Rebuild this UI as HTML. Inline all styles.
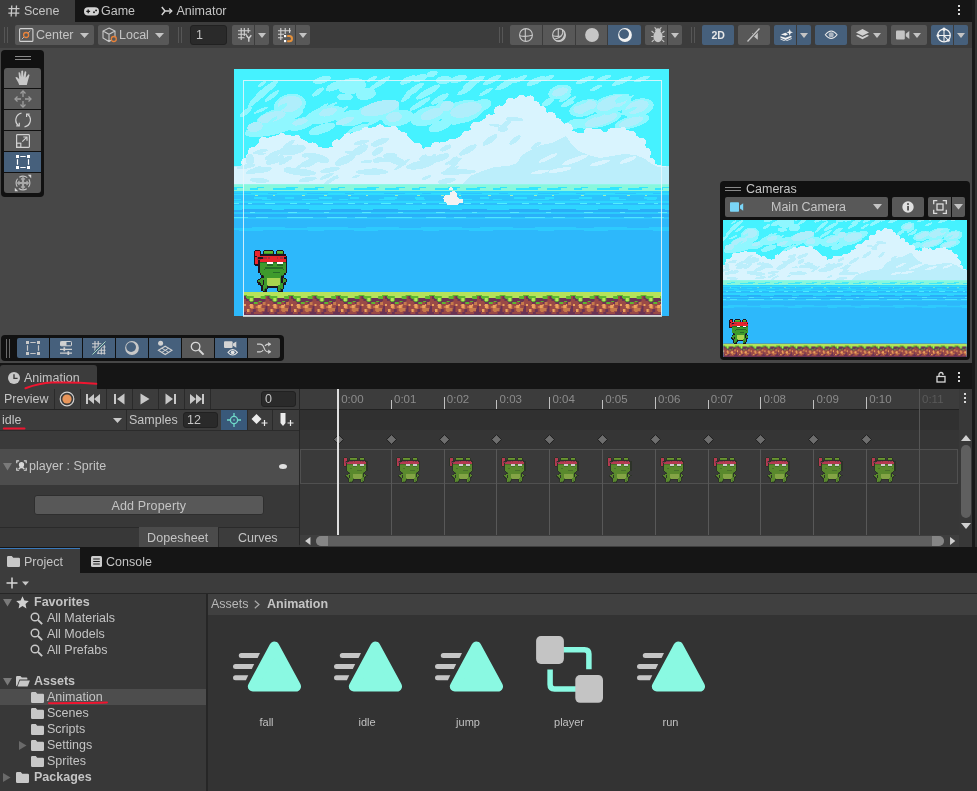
<!DOCTYPE html>
<html lang="en">
<head>
<meta charset="utf-8">
<title>Unity - Animation</title>
<style>
*{box-sizing:border-box;margin:0;padding:0}
html,body{width:977px;height:791px;overflow:hidden;background:#383838}
body{position:relative;will-change:transform;font-family:"Liberation Sans",sans-serif;font-size:12px;color:#c4c4c4;line-height:1}
.abs{position:absolute}
.t{position:absolute;white-space:nowrap;font-size:12.5px;line-height:14px;color:#c4c4c4}
.b{font-weight:bold}
.btn{position:absolute;background:#585858;border-radius:2px}
.on{background:#46607c}
svg{position:absolute;overflow:hidden}
.ic{fill:none;stroke:#c8c8c8;stroke-width:1.2}
</style>
</head>
<body>
<!-- ===== top tab bar ===== -->
<div class="abs" style="left:0;top:0;width:977px;height:22px;background:#151515"></div>
<div class="abs" style="left:0;top:0;width:75px;height:22px;background:#3c3c3c"></div>
<div class="t" style="left:24px;top:4px">Scene</div>
<div class="t" style="left:101px;top:4px">Game</div>
<div class="t" style="left:176.500px;top:4px">Animator</div>
<!-- ===== scene toolbar ===== -->
<div class="abs" style="left:0;top:22px;width:977px;height:26px;background:#3c3c3c"></div>
<div class="abs" style="left:0;top:48px;width:977px;height:316px;background:#474747"></div>
<div class="btn" style="left:15px;top:25px;width:79px;height:20px"></div>
<div class="t" style="left:36px;top:28px">Center</div>
<div class="btn" style="left:98px;top:25px;width:71px;height:20px"></div>
<div class="t" style="left:119px;top:28px">Local</div>
<div class="abs" style="left:190px;top:25px;width:37px;height:20px;background:#2a2a2a;border:1px solid #212121;border-radius:3px"></div>
<div class="t" style="left:196px;top:28px">1</div>
<div class="btn" style="left:232px;top:25px;width:22px;height:20px;border-radius:2px 0 0 2px"></div>
<div class="btn" style="left:255px;top:25px;width:14px;height:20px;border-radius:0 2px 2px 0"></div>
<div class="btn" style="left:273px;top:25px;width:22px;height:20px;border-radius:2px 0 0 2px"></div>
<div class="btn" style="left:296px;top:25px;width:14px;height:20px;border-radius:0 2px 2px 0"></div>
<!-- right group -->
<div class="btn" style="left:510px;top:25px;width:32px;height:20px;border-radius:2px 0 0 2px"></div>
<div class="btn" style="left:543px;top:25px;width:32px;height:20px;border-radius:0"></div>
<div class="btn" style="left:576px;top:25px;width:31px;height:20px;border-radius:0"></div>
<div class="btn on" style="left:608px;top:25px;width:33px;height:20px;border-radius:0 2px 2px 0"></div>
<div class="btn" style="left:645px;top:25px;width:22px;height:20px;border-radius:2px 0 0 2px"></div>
<div class="btn" style="left:668px;top:25px;width:14px;height:20px;border-radius:0 2px 2px 0"></div>
<div class="btn on" style="left:702px;top:25px;width:32px;height:20px"></div>
<div class="t b" style="left:711.500px;top:28px;color:#e8e8e8;font-size:10.500px">2D</div>
<div class="btn" style="left:738px;top:25px;width:32px;height:20px"></div>
<div class="btn on" style="left:774px;top:25px;width:22px;height:20px;border-radius:2px 0 0 2px"></div>
<div class="btn on" style="left:797px;top:25px;width:14px;height:20px;border-radius:0 2px 2px 0"></div>
<div class="btn on" style="left:815px;top:25px;width:32px;height:20px"></div>
<div class="btn" style="left:851px;top:25px;width:36px;height:20px"></div>
<div class="btn" style="left:891px;top:25px;width:36px;height:20px"></div>
<div class="btn on" style="left:931px;top:25px;width:22px;height:20px;border-radius:2px 0 0 2px"></div>
<div class="btn on" style="left:954px;top:25px;width:14px;height:20px;border-radius:0 2px 2px 0"></div>
<!-- ===== tab icons ===== -->
<svg style="left:8px;top:5px" width="12" height="12" viewBox="0 0 12 12" fill="none" stroke="#c8c8c8" stroke-width="1.3"><path d="M3.8 0.5L3.2 11.500M8.500 0.5L7.900 11.500M0.5 3.700H11.500M0.3 8.200H11.300"/></svg>
<svg style="left:84px;top:7px" width="15" height="9" viewBox="0 0 15 9"><rect x="0" y="0.3" width="15" height="8.2" rx="4.100" fill="#d2d2d2"/><path d="M4.200 2.500V6.300M2.300 4.400H6.100" stroke="#1a1a1a" stroke-width="1.300"/><circle cx="10" cy="5.300" r="0.950" fill="#1a1a1a"/><circle cx="12.100" cy="3.400" r="0.950" fill="#1a1a1a"/></svg>
<svg style="left:161px;top:6px" width="12" height="10" viewBox="0 0 12 10" fill="none" stroke="#d2d2d2" stroke-width="1.500"><path d="M0.8 1L4 5L0.8 9M4 5H10.500"/><path d="M8.200 2.500L10.800 5L8.200 7.500" stroke-width="1.300"/></svg>
<!-- ===== toolbar handles ===== -->
<div class="abs" style="left:4px;top:27px;width:1px;height:16px;background:#565656"></div>
<div class="abs" style="left:7px;top:27px;width:1px;height:16px;background:#565656"></div>
<div class="abs" style="left:178px;top:27px;width:1px;height:16px;background:#565656"></div>
<div class="abs" style="left:181px;top:27px;width:1px;height:16px;background:#565656"></div>
<div class="abs" style="left:499px;top:27px;width:1px;height:16px;background:#565656"></div>
<div class="abs" style="left:502px;top:27px;width:1px;height:16px;background:#565656"></div>
<div class="abs" style="left:691px;top:27px;width:1px;height:16px;background:#565656"></div>
<div class="abs" style="left:694px;top:27px;width:1px;height:16px;background:#565656"></div>
<!-- center / local -->
<svg style="left:19px;top:28px" width="15" height="14" viewBox="0 0 15 14" fill="none"><rect x="0.6" y="0.6" width="13.300" height="12.800" rx="1" stroke="#d2d2d2" stroke-width="1.100"/><path d="M2.800 11.200L11.400 2.800" stroke="#b8b8b8" stroke-width="1"/><circle cx="7.100" cy="7" r="2.500" stroke="#e8823a" stroke-width="1.300" fill="#585858"/></svg>
<svg style="left:80px;top:33px" width="9" height="5" viewBox="0 0 9 5"><path d="M0 0H9L4.500 5Z" fill="#c4c4c4"/></svg>
<svg style="left:102px;top:27px" width="16" height="16" viewBox="0 0 16 16" fill="none" stroke="#c8c8c8" stroke-width="1.100"><path d="M7 1L13 4V11L7 14.500L1 11V4ZM1 4L7 7.300L13 4M7 7.300V14.500"/><circle cx="11.800" cy="12" r="2.500" stroke="#e8823a" stroke-width="1.300" fill="#585858"/></svg>
<svg style="left:155px;top:33px" width="9" height="5" viewBox="0 0 9 5"><path d="M0 0H9L4.500 5Z" fill="#c4c4c4"/></svg>
<!-- grid / snap -->
<svg style="left:238px;top:28px" width="14" height="14" viewBox="0 0 14 14" fill="none" stroke="#d2d2d2" stroke-width="1.100"><path d="M3.200 0V12M6.300 0V8M10.200 0V5M0 2.800H12.500M0 6.300H9M0 9.800H6.500"/><path d="M8.300 7.200L10.800 10.400L13.300 7.200M10.800 10.400V13.800" stroke-width="1.400"/></svg>
<svg style="left:258px;top:33px" width="8" height="5" viewBox="0 0 8 5"><path d="M0 0H8L4 5Z" fill="#c4c4c4"/></svg>
<svg style="left:278px;top:28px" width="16" height="15" viewBox="0 0 16 15" fill="none"><path d="M2.800 0V12M7.200 0V6M11.600 0V5M0 2.800H13M0 6.300H6M0 9.800H5" stroke="#d2d2d2" stroke-width="1.100"/><rect x="6" y="7" width="2.200" height="2.200" fill="#fff"/><rect x="6" y="12" width="2.200" height="2.200" fill="#fff"/><path d="M9.200 8.100H11.400A2.600 2.600 0 0 1 11.400 13.300H9.200" stroke="#e8923a" stroke-width="2"/></svg>
<svg style="left:299px;top:33px" width="8" height="5" viewBox="0 0 8 5"><path d="M0 0H8L4 5Z" fill="#c4c4c4"/></svg>
<!-- draw mode group -->
<svg style="left:519px;top:28px" width="14" height="14" viewBox="0 0 14 14" fill="none" stroke="#c8c8c8" stroke-width="1.100"><circle cx="7" cy="7" r="6.400"/><path d="M6.300 0.700V13.300M0.700 7.800Q7 9.200 13.300 7.300"/></svg>
<svg style="left:552px;top:28px" width="14" height="14" viewBox="0 0 14 14" fill="none" stroke="#c8c8c8" stroke-width="1.100"><circle cx="7" cy="7" r="6.400"/><path d="M10.500 1.800A6.400 6.400 0 0 1 2 11.200A6.400 6.400 0 0 0 13.400 7A6.400 6.400 0 0 0 10.500 1.800Z" fill="#c8c8c8" stroke="none"/><path d="M10.500 1.800Q12.500 9 2 11.200" fill="none"/><path d="M6.300 0.700V9.500M0.700 7.800Q5 8.800 9.500 8"/></svg>
<svg style="left:585px;top:28px" width="14" height="14" viewBox="0 0 14 14"><circle cx="7" cy="7" r="6.900" fill="#c6c6c6"/></svg>
<svg style="left:618px;top:28px" width="14" height="14" viewBox="0 0 14 14"><circle cx="7" cy="7" r="6.900" fill="#f2f2f2"/><circle cx="6.100" cy="6.100" r="4.900" fill="#46607c"/></svg>
<!-- bug -->
<svg style="left:651px;top:27px" width="14" height="16" viewBox="0 0 14 16"><ellipse cx="7" cy="9.500" rx="4.600" ry="5.800" fill="#c4c4c4"/><ellipse cx="7" cy="3.600" rx="2.800" ry="2.300" fill="#c4c4c4"/><path d="M2.800 6L0.600 4M11.200 6L13.400 4M2.400 9.500H0.200M11.600 9.500H13.800M2.900 12.800L0.800 14.800M11.100 12.800L13.200 14.800M5 1.800L3.600 0.300M9 1.800L10.400 0.300" stroke="#c4c4c4" stroke-width="1.100" fill="none"/></svg>
<svg style="left:671px;top:33px" width="8" height="5" viewBox="0 0 8 5"><path d="M0 0H8L4 5Z" fill="#c4c4c4"/></svg>
<!-- audio mute -->
<svg style="left:746px;top:27px" width="16" height="16" viewBox="0 0 16 16"><path d="M6 6.200H8.200L11.800 3.200V12.800L8.200 9.800H6Z" fill="#c4c4c4"/><path d="M1.500 14.500L13.500 1.500" stroke="#585858" stroke-width="3.200"/><path d="M1.500 14.500L13.500 1.500" stroke="#c4c4c4" stroke-width="1.300"/></svg>
<!-- fx -->
<svg style="left:779.500px;top:28.500px" width="13.500" height="12.600" viewBox="0 0 15 14" fill="#f0f0f0"><path d="M10.800 0L11.800 2.700L14.500 3.700L11.800 4.700L10.800 7.400L9.800 4.700L7.100 3.700L9.800 2.700Z"/><path d="M6 4.200L9 5.800L6.200 7.600L1 6.200Z"/><path d="M0.500 8L6.200 9.800L12.200 7.600L13.200 9L6.200 12.200L0.500 9.800Z"/><path d="M0.500 10.600L6.200 13L13 10V11.200L6.200 14L0.500 11.800Z" opacity=".9"/></svg>
<svg style="left:800px;top:33px" width="8" height="5" viewBox="0 0 8 5"><path d="M0 0H8L4 5Z" fill="#c4c4c4"/></svg>
<!-- eye -->
<svg style="left:824px;top:30.200px" width="14.400" height="9.600" viewBox="0 0 16 12"><path d="M0.600 6Q8 -3.400 15.400 6Q8 15.400 0.600 6Z" fill="none" stroke="#e8e8e8" stroke-width="1.300"/><circle cx="8" cy="6" r="3.200" fill="#aab4c0"/></svg>
<!-- layers -->
<svg style="left:856px;top:29px" width="13" height="12" viewBox="0 0 13 12" fill="#d0d0d0"><path d="M6.500 0L13 3.400L6.500 6.800L0 3.400Z"/><path d="M1.800 5.700L6.500 8.100L11.200 5.700L13 6.700L6.500 10.200L0 6.700Z"/></svg>
<svg style="left:873px;top:33px" width="8" height="5" viewBox="0 0 8 5"><path d="M0 0H8L4 5Z" fill="#c4c4c4"/></svg>
<!-- camera -->
<svg style="left:896px;top:30px" width="14" height="10" viewBox="0 0 14 10" fill="#c4c4c4"><rect x="0" y="0.500" width="8.800" height="9" rx="1"/><path d="M9.800 3.800L13.300 1V9L9.800 6.200Z"/></svg>
<svg style="left:913px;top:33px" width="8" height="5" viewBox="0 0 8 5"><path d="M0 0H8L4 5Z" fill="#c4c4c4"/></svg>
<!-- gizmo -->
<svg style="left:936.300px;top:26.500px" width="16" height="16" viewBox="0 0 16 16" fill="none" stroke="#f0f0f0" stroke-width="1.300"><circle cx="8" cy="8.500" r="6.300"/><path d="M1.800 8.500H14.200M8 2.500V14.500M8 8.500L12 13" stroke-width="1.100"/><circle cx="8" cy="2.200" r="1.700" fill="#f0f0f0" stroke="none"/><circle cx="2" cy="8.500" r="1.500" fill="#f0f0f0" stroke="none"/><circle cx="12.300" cy="13.200" r="1.500" fill="#f0f0f0" stroke="none"/></svg>
<svg style="left:957px;top:33px" width="8" height="5" viewBox="0 0 8 5"><path d="M0 0H8L4 5Z" fill="#c4c4c4"/></svg>
<!-- ===== shared scene definitions ===== -->
<svg width="0" height="0" style="left:0;top:0">
<defs>
<g id="frog" shape-rendering="crispEdges"><rect x="1.43" y="0.00" width="4.35" height="1.50" fill="#1c1420"/><rect x="10.04" y="0.00" width="8.66" height="1.50" fill="#1c1420"/><rect x="22.96" y="0.00" width="5.79" height="1.50" fill="#1c1420"/><rect x="0.00" y="1.45" width="1.48" height="1.50" fill="#1c1420"/><rect x="1.43" y="1.45" width="4.35" height="1.50" fill="#ea252c"/><rect x="5.74" y="1.45" width="1.48" height="1.50" fill="#1c1420"/><rect x="8.61" y="1.45" width="1.48" height="1.50" fill="#1c1420"/><rect x="10.04" y="1.45" width="8.66" height="1.50" fill="#5eb82f"/><rect x="18.65" y="1.45" width="1.48" height="1.50" fill="#1c1420"/><rect x="21.52" y="1.45" width="1.48" height="1.50" fill="#1c1420"/><rect x="22.96" y="1.45" width="5.79" height="1.50" fill="#5eb82f"/><rect x="28.70" y="1.45" width="1.48" height="1.50" fill="#1c1420"/><rect x="0.00" y="2.90" width="1.48" height="1.50" fill="#1c1420"/><rect x="1.43" y="2.90" width="4.35" height="1.50" fill="#ea252c"/><rect x="5.74" y="2.90" width="1.48" height="1.50" fill="#1c1420"/><rect x="8.61" y="2.90" width="1.48" height="1.50" fill="#1c1420"/><rect x="10.04" y="2.90" width="8.66" height="1.50" fill="#3e9a2c"/><rect x="18.65" y="2.90" width="1.48" height="1.50" fill="#1c1420"/><rect x="21.52" y="2.90" width="1.48" height="1.50" fill="#1c1420"/><rect x="22.96" y="2.90" width="5.79" height="1.50" fill="#3e9a2c"/><rect x="28.70" y="2.90" width="1.48" height="1.50" fill="#1c1420"/><rect x="0.00" y="4.34" width="1.48" height="1.50" fill="#1c1420"/><rect x="1.43" y="4.34" width="4.35" height="1.50" fill="#ea252c"/><rect x="5.74" y="4.34" width="25.88" height="1.50" fill="#1c1420"/><rect x="0.00" y="5.79" width="2.92" height="1.50" fill="#1c1420"/><rect x="2.87" y="5.79" width="28.75" height="1.50" fill="#ea252c"/><rect x="31.57" y="5.79" width="1.48" height="1.50" fill="#1c1420"/><rect x="0.00" y="7.24" width="1.48" height="1.50" fill="#1c1420"/><rect x="1.43" y="7.24" width="1.48" height="1.50" fill="#ea252c"/><rect x="2.87" y="7.24" width="1.48" height="1.50" fill="#a82c3c"/><rect x="4.30" y="7.24" width="4.35" height="1.50" fill="#1c1420"/><rect x="8.61" y="7.24" width="4.35" height="1.50" fill="#a82c3c"/><rect x="12.91" y="7.24" width="1.48" height="1.50" fill="#ea252c"/><rect x="14.35" y="7.24" width="1.48" height="1.50" fill="#a82c3c"/><rect x="15.78" y="7.24" width="7.22" height="1.50" fill="#ea252c"/><rect x="22.96" y="7.24" width="1.48" height="1.50" fill="#a82c3c"/><rect x="24.39" y="7.24" width="1.48" height="1.50" fill="#ea252c"/><rect x="25.83" y="7.24" width="2.92" height="1.50" fill="#a82c3c"/><rect x="28.70" y="7.24" width="1.48" height="1.50" fill="#ea252c"/><rect x="30.13" y="7.24" width="2.92" height="1.50" fill="#1c1420"/><rect x="0.00" y="8.69" width="1.48" height="1.50" fill="#1c1420"/><rect x="1.43" y="8.69" width="1.48" height="1.50" fill="#ea252c"/><rect x="2.87" y="8.69" width="4.35" height="1.50" fill="#a82c3c"/><rect x="7.17" y="8.69" width="24.44" height="1.50" fill="#ea252c"/><rect x="31.57" y="8.69" width="1.48" height="1.50" fill="#1c1420"/><rect x="0.00" y="10.14" width="1.48" height="1.50" fill="#1c1420"/><rect x="1.43" y="10.14" width="2.92" height="1.50" fill="#ea252c"/><rect x="4.30" y="10.14" width="1.48" height="1.50" fill="#1c1420"/><rect x="5.74" y="10.14" width="25.88" height="1.50" fill="#ea252c"/><rect x="31.57" y="10.14" width="1.48" height="1.50" fill="#1c1420"/><rect x="0.00" y="11.59" width="1.48" height="1.50" fill="#1c1420"/><rect x="1.43" y="11.59" width="2.92" height="1.50" fill="#ea252c"/><rect x="4.30" y="11.59" width="1.48" height="1.50" fill="#1c1420"/><rect x="5.74" y="11.59" width="7.22" height="1.50" fill="#256b28"/><rect x="12.91" y="11.59" width="5.79" height="1.50" fill="#ffffff"/><rect x="18.65" y="11.59" width="4.35" height="1.50" fill="#256b28"/><rect x="22.96" y="11.59" width="5.79" height="1.50" fill="#ffffff"/><rect x="28.70" y="11.59" width="2.92" height="1.50" fill="#256b28"/><rect x="31.57" y="11.59" width="1.48" height="1.50" fill="#1c1420"/><rect x="0.00" y="13.03" width="1.48" height="1.50" fill="#1c1420"/><rect x="1.43" y="13.03" width="2.92" height="1.50" fill="#ea252c"/><rect x="4.30" y="13.03" width="1.48" height="1.50" fill="#1c1420"/><rect x="5.74" y="13.03" width="7.22" height="1.50" fill="#3e9a2c"/><rect x="12.91" y="13.03" width="5.79" height="1.50" fill="#ffffff"/><rect x="18.65" y="13.03" width="4.35" height="1.50" fill="#3e9a2c"/><rect x="22.96" y="13.03" width="5.79" height="1.50" fill="#ffffff"/><rect x="28.70" y="13.03" width="2.92" height="1.50" fill="#3e9a2c"/><rect x="31.57" y="13.03" width="1.48" height="1.50" fill="#1c1420"/><rect x="1.43" y="14.48" width="4.35" height="1.50" fill="#1c1420"/><rect x="5.74" y="14.48" width="7.22" height="1.50" fill="#3e9a2c"/><rect x="12.91" y="14.48" width="5.79" height="1.50" fill="#256b28"/><rect x="18.65" y="14.48" width="4.35" height="1.50" fill="#3e9a2c"/><rect x="22.96" y="14.48" width="5.79" height="1.50" fill="#256b28"/><rect x="28.70" y="14.48" width="2.92" height="1.50" fill="#3e9a2c"/><rect x="31.57" y="14.48" width="1.48" height="1.50" fill="#1c1420"/><rect x="4.30" y="15.93" width="1.48" height="1.50" fill="#1c1420"/><rect x="5.74" y="15.93" width="25.88" height="1.50" fill="#3e9a2c"/><rect x="31.57" y="15.93" width="1.48" height="1.50" fill="#1c1420"/><rect x="4.30" y="17.38" width="1.48" height="1.50" fill="#1c1420"/><rect x="5.74" y="17.38" width="5.79" height="1.50" fill="#3e9a2c"/><rect x="11.48" y="17.38" width="17.27" height="1.50" fill="#256b28"/><rect x="28.70" y="17.38" width="2.92" height="1.50" fill="#3e9a2c"/><rect x="31.57" y="17.38" width="1.48" height="1.50" fill="#1c1420"/><rect x="4.30" y="18.83" width="1.48" height="1.50" fill="#1c1420"/><rect x="5.74" y="18.83" width="4.35" height="1.50" fill="#3e9a2c"/><rect x="10.04" y="18.83" width="1.48" height="1.50" fill="#256b28"/><rect x="11.48" y="18.83" width="17.27" height="1.50" fill="#3e9a2c"/><rect x="28.70" y="18.83" width="1.48" height="1.50" fill="#256b28"/><rect x="30.13" y="18.83" width="1.48" height="1.50" fill="#3e9a2c"/><rect x="31.57" y="18.83" width="1.48" height="1.50" fill="#1c1420"/><rect x="4.30" y="20.28" width="1.48" height="1.50" fill="#1c1420"/><rect x="5.74" y="20.28" width="25.88" height="1.50" fill="#3e9a2c"/><rect x="31.57" y="20.28" width="1.48" height="1.50" fill="#1c1420"/><rect x="4.30" y="21.72" width="1.48" height="1.50" fill="#1c1420"/><rect x="5.74" y="21.72" width="12.96" height="1.50" fill="#3e9a2c"/><rect x="18.65" y="21.72" width="7.22" height="1.50" fill="#256b28"/><rect x="25.83" y="21.72" width="5.79" height="1.50" fill="#3e9a2c"/><rect x="31.57" y="21.72" width="1.48" height="1.50" fill="#1c1420"/><rect x="5.74" y="23.17" width="1.48" height="1.50" fill="#1c1420"/><rect x="7.17" y="23.17" width="23.01" height="1.50" fill="#3e9a2c"/><rect x="30.13" y="23.17" width="1.48" height="1.50" fill="#1c1420"/><rect x="7.17" y="24.62" width="1.48" height="1.50" fill="#1c1420"/><rect x="8.61" y="24.62" width="1.48" height="1.50" fill="#256b28"/><rect x="10.04" y="24.62" width="17.27" height="1.50" fill="#3e9a2c"/><rect x="27.26" y="24.62" width="1.48" height="1.50" fill="#256b28"/><rect x="28.70" y="24.62" width="1.48" height="1.50" fill="#1c1420"/><rect x="7.17" y="26.07" width="2.92" height="1.50" fill="#1c1420"/><rect x="10.04" y="26.07" width="17.27" height="1.50" fill="#3e9a2c"/><rect x="27.26" y="26.07" width="2.92" height="1.50" fill="#1c1420"/><rect x="5.74" y="27.52" width="1.48" height="1.50" fill="#1c1420"/><rect x="7.17" y="27.52" width="5.79" height="1.50" fill="#3e9a2c"/><rect x="12.91" y="27.52" width="12.96" height="1.50" fill="#a9d44f"/><rect x="25.83" y="27.52" width="1.48" height="1.50" fill="#3e9a2c"/><rect x="27.26" y="27.52" width="1.48" height="1.50" fill="#1c1420"/><rect x="28.70" y="27.52" width="1.48" height="1.50" fill="#3e9a2c"/><rect x="30.13" y="27.52" width="1.48" height="1.50" fill="#1c1420"/><rect x="4.30" y="28.97" width="1.48" height="1.50" fill="#1c1420"/><rect x="5.74" y="28.97" width="7.22" height="1.50" fill="#3e9a2c"/><rect x="12.91" y="28.97" width="12.96" height="1.50" fill="#a9d44f"/><rect x="25.83" y="28.97" width="1.48" height="1.50" fill="#3e9a2c"/><rect x="27.26" y="28.97" width="1.48" height="1.50" fill="#1c1420"/><rect x="28.70" y="28.97" width="2.92" height="1.50" fill="#3e9a2c"/><rect x="31.57" y="28.97" width="1.48" height="1.50" fill="#1c1420"/><rect x="2.87" y="30.41" width="1.48" height="1.50" fill="#1c1420"/><rect x="4.30" y="30.41" width="4.35" height="1.50" fill="#3e9a2c"/><rect x="8.61" y="30.41" width="1.48" height="1.50" fill="#1c1420"/><rect x="10.04" y="30.41" width="2.92" height="1.50" fill="#3e9a2c"/><rect x="12.91" y="30.41" width="12.96" height="1.50" fill="#a9d44f"/><rect x="25.83" y="30.41" width="1.48" height="1.50" fill="#3e9a2c"/><rect x="27.26" y="30.41" width="1.48" height="1.50" fill="#1c1420"/><rect x="28.70" y="30.41" width="2.92" height="1.50" fill="#3e9a2c"/><rect x="31.57" y="30.41" width="1.48" height="1.50" fill="#1c1420"/><rect x="2.87" y="31.86" width="2.92" height="1.50" fill="#1c1420"/><rect x="5.74" y="31.86" width="2.92" height="1.50" fill="#3e9a2c"/><rect x="8.61" y="31.86" width="1.48" height="1.50" fill="#1c1420"/><rect x="10.04" y="31.86" width="2.92" height="1.50" fill="#3e9a2c"/><rect x="12.91" y="31.86" width="12.96" height="1.50" fill="#a9d44f"/><rect x="25.83" y="31.86" width="1.48" height="1.50" fill="#3e9a2c"/><rect x="27.26" y="31.86" width="1.48" height="1.50" fill="#1c1420"/><rect x="28.70" y="31.86" width="1.48" height="1.50" fill="#3e9a2c"/><rect x="30.13" y="31.86" width="1.48" height="1.50" fill="#1c1420"/><rect x="4.30" y="33.31" width="2.92" height="1.50" fill="#1c1420"/><rect x="7.17" y="33.31" width="1.48" height="1.50" fill="#3e9a2c"/><rect x="8.61" y="33.31" width="1.48" height="1.50" fill="#1c1420"/><rect x="10.04" y="33.31" width="2.92" height="1.50" fill="#3e9a2c"/><rect x="12.91" y="33.31" width="12.96" height="1.50" fill="#a9d44f"/><rect x="25.83" y="33.31" width="2.92" height="1.50" fill="#3e9a2c"/><rect x="28.70" y="33.31" width="2.92" height="1.50" fill="#1c1420"/><rect x="5.74" y="34.76" width="2.92" height="1.50" fill="#1c1420"/><rect x="8.61" y="34.76" width="5.79" height="1.50" fill="#3e9a2c"/><rect x="14.35" y="34.76" width="10.09" height="1.50" fill="#a9d44f"/><rect x="24.39" y="34.76" width="4.35" height="1.50" fill="#3e9a2c"/><rect x="28.70" y="34.76" width="1.48" height="1.50" fill="#1c1420"/><rect x="7.17" y="36.21" width="1.48" height="1.50" fill="#1c1420"/><rect x="8.61" y="36.21" width="4.35" height="1.50" fill="#3e9a2c"/><rect x="12.91" y="36.21" width="11.53" height="1.50" fill="#1c1420"/><rect x="24.39" y="36.21" width="4.35" height="1.50" fill="#3e9a2c"/><rect x="28.70" y="36.21" width="1.48" height="1.50" fill="#1c1420"/><rect x="7.17" y="37.66" width="1.48" height="1.50" fill="#1c1420"/><rect x="8.61" y="37.66" width="2.92" height="1.50" fill="#3e9a2c"/><rect x="11.48" y="37.66" width="1.48" height="1.50" fill="#256b28"/><rect x="12.91" y="37.66" width="1.48" height="1.50" fill="#1c1420"/><rect x="22.96" y="37.66" width="1.48" height="1.50" fill="#1c1420"/><rect x="24.39" y="37.66" width="1.48" height="1.50" fill="#3e9a2c"/><rect x="25.83" y="37.66" width="1.48" height="1.50" fill="#256b28"/><rect x="27.26" y="37.66" width="1.48" height="1.50" fill="#3e9a2c"/><rect x="28.70" y="37.66" width="1.48" height="1.50" fill="#1c1420"/><rect x="7.17" y="39.10" width="1.48" height="1.50" fill="#1c1420"/><rect x="8.61" y="39.10" width="1.48" height="1.50" fill="#3e9a2c"/><rect x="10.04" y="39.10" width="1.48" height="1.50" fill="#256b28"/><rect x="11.48" y="39.10" width="1.48" height="1.50" fill="#1c1420"/><rect x="22.96" y="39.10" width="1.48" height="1.50" fill="#1c1420"/><rect x="24.39" y="39.10" width="1.48" height="1.50" fill="#3e9a2c"/><rect x="25.83" y="39.10" width="1.48" height="1.50" fill="#256b28"/><rect x="27.26" y="39.10" width="1.48" height="1.50" fill="#1c1420"/><rect x="8.61" y="40.55" width="4.35" height="1.50" fill="#1c1420"/><rect x="24.39" y="40.55" width="4.35" height="1.50" fill="#1c1420"/></g>
<g id="frogt" shape-rendering="crispEdges"><rect x="1.43" y="0.00" width="4.35" height="1.50" fill="#2d3329"/><rect x="10.04" y="0.00" width="8.66" height="1.50" fill="#2d3329"/><rect x="22.96" y="0.00" width="5.79" height="1.50" fill="#2d3329"/><rect x="0.00" y="1.45" width="1.48" height="1.50" fill="#2d3329"/><rect x="1.43" y="1.45" width="4.35" height="1.50" fill="#b43a50"/><rect x="5.74" y="1.45" width="1.48" height="1.50" fill="#2d3329"/><rect x="8.61" y="1.45" width="1.48" height="1.50" fill="#2d3329"/><rect x="10.04" y="1.45" width="8.66" height="1.50" fill="#6d9530"/><rect x="18.65" y="1.45" width="1.48" height="1.50" fill="#2d3329"/><rect x="21.52" y="1.45" width="1.48" height="1.50" fill="#2d3329"/><rect x="22.96" y="1.45" width="5.79" height="1.50" fill="#6d9530"/><rect x="28.70" y="1.45" width="1.48" height="1.50" fill="#2d3329"/><rect x="0.00" y="2.90" width="1.48" height="1.50" fill="#2d3329"/><rect x="1.43" y="2.90" width="4.35" height="1.50" fill="#b43a50"/><rect x="5.74" y="2.90" width="1.48" height="1.50" fill="#2d3329"/><rect x="8.61" y="2.90" width="1.48" height="1.50" fill="#2d3329"/><rect x="10.04" y="2.90" width="8.66" height="1.50" fill="#5a892d"/><rect x="18.65" y="2.90" width="1.48" height="1.50" fill="#2d3329"/><rect x="21.52" y="2.90" width="1.48" height="1.50" fill="#2d3329"/><rect x="22.96" y="2.90" width="5.79" height="1.50" fill="#5a892d"/><rect x="28.70" y="2.90" width="1.48" height="1.50" fill="#2d3329"/><rect x="0.00" y="4.34" width="1.48" height="1.50" fill="#2d3329"/><rect x="1.43" y="4.34" width="4.35" height="1.50" fill="#b43a50"/><rect x="5.74" y="4.34" width="25.88" height="1.50" fill="#2d3329"/><rect x="0.00" y="5.79" width="2.92" height="1.50" fill="#2d3329"/><rect x="2.87" y="5.79" width="28.75" height="1.50" fill="#b43a50"/><rect x="31.57" y="5.79" width="1.48" height="1.50" fill="#2d3329"/><rect x="0.00" y="7.24" width="1.48" height="1.50" fill="#2d3329"/><rect x="1.43" y="7.24" width="1.48" height="1.50" fill="#b43a50"/><rect x="2.87" y="7.24" width="1.48" height="1.50" fill="#85354e"/><rect x="4.30" y="7.24" width="4.35" height="1.50" fill="#2d3329"/><rect x="8.61" y="7.24" width="4.35" height="1.50" fill="#85354e"/><rect x="12.91" y="7.24" width="1.48" height="1.50" fill="#b43a50"/><rect x="14.35" y="7.24" width="1.48" height="1.50" fill="#85354e"/><rect x="15.78" y="7.24" width="7.22" height="1.50" fill="#b43a50"/><rect x="22.96" y="7.24" width="1.48" height="1.50" fill="#85354e"/><rect x="24.39" y="7.24" width="1.48" height="1.50" fill="#b43a50"/><rect x="25.83" y="7.24" width="2.92" height="1.50" fill="#85354e"/><rect x="28.70" y="7.24" width="1.48" height="1.50" fill="#b43a50"/><rect x="30.13" y="7.24" width="2.92" height="1.50" fill="#2d3329"/><rect x="0.00" y="8.69" width="1.48" height="1.50" fill="#2d3329"/><rect x="1.43" y="8.69" width="1.48" height="1.50" fill="#b43a50"/><rect x="2.87" y="8.69" width="4.35" height="1.50" fill="#85354e"/><rect x="7.17" y="8.69" width="24.44" height="1.50" fill="#b43a50"/><rect x="31.57" y="8.69" width="1.48" height="1.50" fill="#2d3329"/><rect x="0.00" y="10.14" width="1.48" height="1.50" fill="#2d3329"/><rect x="1.43" y="10.14" width="2.92" height="1.50" fill="#b43a50"/><rect x="4.30" y="10.14" width="1.48" height="1.50" fill="#2d3329"/><rect x="5.74" y="10.14" width="25.88" height="1.50" fill="#b43a50"/><rect x="31.57" y="10.14" width="1.48" height="1.50" fill="#2d3329"/><rect x="0.00" y="11.59" width="1.48" height="1.50" fill="#2d3329"/><rect x="1.43" y="11.59" width="2.92" height="1.50" fill="#b43a50"/><rect x="4.30" y="11.59" width="1.48" height="1.50" fill="#2d3329"/><rect x="5.74" y="11.59" width="7.22" height="1.50" fill="#48702a"/><rect x="12.91" y="11.59" width="5.79" height="1.50" fill="#cdcdcd"/><rect x="18.65" y="11.59" width="4.35" height="1.50" fill="#48702a"/><rect x="22.96" y="11.59" width="5.79" height="1.50" fill="#cdcdcd"/><rect x="28.70" y="11.59" width="2.92" height="1.50" fill="#48702a"/><rect x="31.57" y="11.59" width="1.48" height="1.50" fill="#2d3329"/><rect x="0.00" y="13.03" width="1.48" height="1.50" fill="#2d3329"/><rect x="1.43" y="13.03" width="2.92" height="1.50" fill="#b43a50"/><rect x="4.30" y="13.03" width="1.48" height="1.50" fill="#2d3329"/><rect x="5.74" y="13.03" width="7.22" height="1.50" fill="#5a892d"/><rect x="12.91" y="13.03" width="5.79" height="1.50" fill="#cdcdcd"/><rect x="18.65" y="13.03" width="4.35" height="1.50" fill="#5a892d"/><rect x="22.96" y="13.03" width="5.79" height="1.50" fill="#cdcdcd"/><rect x="28.70" y="13.03" width="2.92" height="1.50" fill="#5a892d"/><rect x="31.57" y="13.03" width="1.48" height="1.50" fill="#2d3329"/><rect x="1.43" y="14.48" width="4.35" height="1.50" fill="#2d3329"/><rect x="5.74" y="14.48" width="7.22" height="1.50" fill="#5a892d"/><rect x="12.91" y="14.48" width="5.79" height="1.50" fill="#48702a"/><rect x="18.65" y="14.48" width="4.35" height="1.50" fill="#5a892d"/><rect x="22.96" y="14.48" width="5.79" height="1.50" fill="#48702a"/><rect x="28.70" y="14.48" width="2.92" height="1.50" fill="#5a892d"/><rect x="31.57" y="14.48" width="1.48" height="1.50" fill="#2d3329"/><rect x="4.30" y="15.93" width="1.48" height="1.50" fill="#2d3329"/><rect x="5.74" y="15.93" width="25.88" height="1.50" fill="#5a892d"/><rect x="31.57" y="15.93" width="1.48" height="1.50" fill="#2d3329"/><rect x="4.30" y="17.38" width="1.48" height="1.50" fill="#2d3329"/><rect x="5.74" y="17.38" width="5.79" height="1.50" fill="#5a892d"/><rect x="11.48" y="17.38" width="17.27" height="1.50" fill="#48702a"/><rect x="28.70" y="17.38" width="2.92" height="1.50" fill="#5a892d"/><rect x="31.57" y="17.38" width="1.48" height="1.50" fill="#2d3329"/><rect x="4.30" y="18.83" width="1.48" height="1.50" fill="#2d3329"/><rect x="5.74" y="18.83" width="4.35" height="1.50" fill="#5a892d"/><rect x="10.04" y="18.83" width="1.48" height="1.50" fill="#48702a"/><rect x="11.48" y="18.83" width="17.27" height="1.50" fill="#5a892d"/><rect x="28.70" y="18.83" width="1.48" height="1.50" fill="#48702a"/><rect x="30.13" y="18.83" width="1.48" height="1.50" fill="#5a892d"/><rect x="31.57" y="18.83" width="1.48" height="1.50" fill="#2d3329"/><rect x="4.30" y="20.28" width="1.48" height="1.50" fill="#2d3329"/><rect x="5.74" y="20.28" width="25.88" height="1.50" fill="#5a892d"/><rect x="31.57" y="20.28" width="1.48" height="1.50" fill="#2d3329"/><rect x="4.30" y="21.72" width="1.48" height="1.50" fill="#2d3329"/><rect x="5.74" y="21.72" width="12.96" height="1.50" fill="#5a892d"/><rect x="18.65" y="21.72" width="7.22" height="1.50" fill="#48702a"/><rect x="25.83" y="21.72" width="5.79" height="1.50" fill="#5a892d"/><rect x="31.57" y="21.72" width="1.48" height="1.50" fill="#2d3329"/><rect x="5.74" y="23.17" width="1.48" height="1.50" fill="#2d3329"/><rect x="7.17" y="23.17" width="23.01" height="1.50" fill="#5a892d"/><rect x="30.13" y="23.17" width="1.48" height="1.50" fill="#2d3329"/><rect x="7.17" y="24.62" width="1.48" height="1.50" fill="#2d3329"/><rect x="8.61" y="24.62" width="1.48" height="1.50" fill="#48702a"/><rect x="10.04" y="24.62" width="17.27" height="1.50" fill="#5a892d"/><rect x="27.26" y="24.62" width="1.48" height="1.50" fill="#48702a"/><rect x="28.70" y="24.62" width="1.48" height="1.50" fill="#2d3329"/><rect x="7.17" y="26.07" width="2.92" height="1.50" fill="#2d3329"/><rect x="10.04" y="26.07" width="17.27" height="1.50" fill="#5a892d"/><rect x="27.26" y="26.07" width="2.92" height="1.50" fill="#2d3329"/><rect x="5.74" y="27.52" width="1.48" height="1.50" fill="#2d3329"/><rect x="7.17" y="27.52" width="5.79" height="1.50" fill="#5a892d"/><rect x="12.91" y="27.52" width="12.96" height="1.50" fill="#83a445"/><rect x="25.83" y="27.52" width="1.48" height="1.50" fill="#5a892d"/><rect x="27.26" y="27.52" width="1.48" height="1.50" fill="#2d3329"/><rect x="28.70" y="27.52" width="1.48" height="1.50" fill="#5a892d"/><rect x="30.13" y="27.52" width="1.48" height="1.50" fill="#2d3329"/><rect x="4.30" y="28.97" width="1.48" height="1.50" fill="#2d3329"/><rect x="5.74" y="28.97" width="7.22" height="1.50" fill="#5a892d"/><rect x="12.91" y="28.97" width="12.96" height="1.50" fill="#83a445"/><rect x="25.83" y="28.97" width="1.48" height="1.50" fill="#5a892d"/><rect x="27.26" y="28.97" width="1.48" height="1.50" fill="#2d3329"/><rect x="28.70" y="28.97" width="2.92" height="1.50" fill="#5a892d"/><rect x="31.57" y="28.97" width="1.48" height="1.50" fill="#2d3329"/><rect x="2.87" y="30.41" width="1.48" height="1.50" fill="#2d3329"/><rect x="4.30" y="30.41" width="4.35" height="1.50" fill="#5a892d"/><rect x="8.61" y="30.41" width="1.48" height="1.50" fill="#2d3329"/><rect x="10.04" y="30.41" width="2.92" height="1.50" fill="#5a892d"/><rect x="12.91" y="30.41" width="12.96" height="1.50" fill="#83a445"/><rect x="25.83" y="30.41" width="1.48" height="1.50" fill="#5a892d"/><rect x="27.26" y="30.41" width="1.48" height="1.50" fill="#2d3329"/><rect x="28.70" y="30.41" width="2.92" height="1.50" fill="#5a892d"/><rect x="31.57" y="30.41" width="1.48" height="1.50" fill="#2d3329"/><rect x="2.87" y="31.86" width="2.92" height="1.50" fill="#2d3329"/><rect x="5.74" y="31.86" width="2.92" height="1.50" fill="#5a892d"/><rect x="8.61" y="31.86" width="1.48" height="1.50" fill="#2d3329"/><rect x="10.04" y="31.86" width="2.92" height="1.50" fill="#5a892d"/><rect x="12.91" y="31.86" width="12.96" height="1.50" fill="#83a445"/><rect x="25.83" y="31.86" width="1.48" height="1.50" fill="#5a892d"/><rect x="27.26" y="31.86" width="1.48" height="1.50" fill="#2d3329"/><rect x="28.70" y="31.86" width="1.48" height="1.50" fill="#5a892d"/><rect x="30.13" y="31.86" width="1.48" height="1.50" fill="#2d3329"/><rect x="4.30" y="33.31" width="2.92" height="1.50" fill="#2d3329"/><rect x="7.17" y="33.31" width="1.48" height="1.50" fill="#5a892d"/><rect x="8.61" y="33.31" width="1.48" height="1.50" fill="#2d3329"/><rect x="10.04" y="33.31" width="2.92" height="1.50" fill="#5a892d"/><rect x="12.91" y="33.31" width="12.96" height="1.50" fill="#83a445"/><rect x="25.83" y="33.31" width="2.92" height="1.50" fill="#5a892d"/><rect x="28.70" y="33.31" width="2.92" height="1.50" fill="#2d3329"/><rect x="5.74" y="34.76" width="2.92" height="1.50" fill="#2d3329"/><rect x="8.61" y="34.76" width="5.79" height="1.50" fill="#5a892d"/><rect x="14.35" y="34.76" width="10.09" height="1.50" fill="#83a445"/><rect x="24.39" y="34.76" width="4.35" height="1.50" fill="#5a892d"/><rect x="28.70" y="34.76" width="1.48" height="1.50" fill="#2d3329"/><rect x="7.17" y="36.21" width="1.48" height="1.50" fill="#2d3329"/><rect x="8.61" y="36.21" width="4.35" height="1.50" fill="#5a892d"/><rect x="12.91" y="36.21" width="11.53" height="1.50" fill="#2d3329"/><rect x="24.39" y="36.21" width="4.35" height="1.50" fill="#5a892d"/><rect x="28.70" y="36.21" width="1.48" height="1.50" fill="#2d3329"/><rect x="7.17" y="37.66" width="1.48" height="1.50" fill="#2d3329"/><rect x="8.61" y="37.66" width="2.92" height="1.50" fill="#5a892d"/><rect x="11.48" y="37.66" width="1.48" height="1.50" fill="#48702a"/><rect x="12.91" y="37.66" width="1.48" height="1.50" fill="#2d3329"/><rect x="22.96" y="37.66" width="1.48" height="1.50" fill="#2d3329"/><rect x="24.39" y="37.66" width="1.48" height="1.50" fill="#5a892d"/><rect x="25.83" y="37.66" width="1.48" height="1.50" fill="#48702a"/><rect x="27.26" y="37.66" width="1.48" height="1.50" fill="#5a892d"/><rect x="28.70" y="37.66" width="1.48" height="1.50" fill="#2d3329"/><rect x="7.17" y="39.10" width="1.48" height="1.50" fill="#2d3329"/><rect x="8.61" y="39.10" width="1.48" height="1.50" fill="#5a892d"/><rect x="10.04" y="39.10" width="1.48" height="1.50" fill="#48702a"/><rect x="11.48" y="39.10" width="1.48" height="1.50" fill="#2d3329"/><rect x="22.96" y="39.10" width="1.48" height="1.50" fill="#2d3329"/><rect x="24.39" y="39.10" width="1.48" height="1.50" fill="#5a892d"/><rect x="25.83" y="39.10" width="1.48" height="1.50" fill="#48702a"/><rect x="27.26" y="39.10" width="1.48" height="1.50" fill="#2d3329"/><rect x="8.61" y="40.55" width="4.35" height="1.50" fill="#2d3329"/><rect x="24.39" y="40.55" width="4.35" height="1.50" fill="#2d3329"/></g>
<pattern id="gtile" x="244" y="292" width="23.5" height="23" patternUnits="userSpaceOnUse"><g shape-rendering="crispEdges"><rect x="0.00" y="0.00" width="23.55" height="1.49" fill="#b6e35a"/><rect x="0.00" y="1.44" width="23.55" height="1.49" fill="#b6e35a"/><rect x="0.00" y="2.88" width="2.99" height="1.49" fill="#5db830"/><rect x="2.94" y="2.88" width="17.68" height="1.49" fill="#b6e35a"/><rect x="20.56" y="2.88" width="2.99" height="1.49" fill="#5db830"/><rect x="0.00" y="4.31" width="1.52" height="1.49" fill="#6a3455"/><rect x="1.47" y="4.31" width="8.86" height="1.49" fill="#5db830"/><rect x="10.28" y="4.31" width="5.92" height="1.49" fill="#b6e35a"/><rect x="16.16" y="4.31" width="5.92" height="1.49" fill="#5db830"/><rect x="22.03" y="4.31" width="1.52" height="1.49" fill="#9a4a47"/><rect x="0.00" y="5.75" width="2.99" height="1.49" fill="#6a3455"/><rect x="2.94" y="5.75" width="2.99" height="1.49" fill="#5db830"/><rect x="5.88" y="5.75" width="2.99" height="1.49" fill="#b6e35a"/><rect x="8.81" y="5.75" width="1.52" height="1.49" fill="#5db830"/><rect x="10.28" y="5.75" width="5.92" height="1.49" fill="#6a3455"/><rect x="16.16" y="5.75" width="5.92" height="1.49" fill="#5db830"/><rect x="22.03" y="5.75" width="1.52" height="1.49" fill="#9a4a47"/><rect x="0.00" y="7.19" width="1.52" height="1.49" fill="#9a4a47"/><rect x="1.47" y="7.19" width="2.99" height="1.49" fill="#6a3455"/><rect x="4.41" y="7.19" width="1.52" height="1.49" fill="#5db830"/><rect x="5.88" y="7.19" width="2.99" height="1.49" fill="#b6e35a"/><rect x="8.81" y="7.19" width="1.52" height="1.49" fill="#5db830"/><rect x="10.28" y="7.19" width="11.80" height="1.49" fill="#6a3455"/><rect x="22.03" y="7.19" width="1.52" height="1.49" fill="#9a4a47"/><rect x="0.00" y="8.62" width="4.46" height="1.49" fill="#9a4a47"/><rect x="4.41" y="8.62" width="1.52" height="1.49" fill="#6a3455"/><rect x="5.88" y="8.62" width="2.99" height="1.49" fill="#5db830"/><rect x="8.81" y="8.62" width="5.92" height="1.49" fill="#6a3455"/><rect x="14.69" y="8.62" width="2.99" height="1.49" fill="#5db830"/><rect x="17.62" y="8.62" width="2.99" height="1.49" fill="#6a3455"/><rect x="20.56" y="8.62" width="2.99" height="1.49" fill="#9a4a47"/><rect x="0.00" y="10.06" width="5.92" height="1.49" fill="#9a4a47"/><rect x="5.88" y="10.06" width="4.46" height="1.49" fill="#6a3455"/><rect x="10.28" y="10.06" width="2.99" height="1.49" fill="#5db830"/><rect x="13.22" y="10.06" width="2.99" height="1.49" fill="#9a4a47"/><rect x="16.16" y="10.06" width="2.99" height="1.49" fill="#6a3455"/><rect x="19.09" y="10.06" width="2.99" height="1.49" fill="#c77a4b"/><rect x="22.03" y="10.06" width="1.52" height="1.49" fill="#9a4a47"/><rect x="0.00" y="11.50" width="1.52" height="1.49" fill="#eda35e"/><rect x="1.47" y="11.50" width="4.46" height="1.49" fill="#9a4a47"/><rect x="5.88" y="11.50" width="2.99" height="1.49" fill="#eda35e"/><rect x="8.81" y="11.50" width="7.39" height="1.49" fill="#9a4a47"/><rect x="16.16" y="11.50" width="1.52" height="1.49" fill="#eda35e"/><rect x="17.62" y="11.50" width="1.52" height="1.49" fill="#9a4a47"/><rect x="19.09" y="11.50" width="2.99" height="1.49" fill="#c77a4b"/><rect x="22.03" y="11.50" width="1.52" height="1.49" fill="#9a4a47"/><rect x="0.00" y="12.94" width="1.52" height="1.49" fill="#eda35e"/><rect x="1.47" y="12.94" width="2.99" height="1.49" fill="#9a4a47"/><rect x="4.41" y="12.94" width="1.52" height="1.49" fill="#c77a4b"/><rect x="5.88" y="12.94" width="2.99" height="1.49" fill="#eda35e"/><rect x="8.81" y="12.94" width="1.52" height="1.49" fill="#c77a4b"/><rect x="10.28" y="12.94" width="2.99" height="1.49" fill="#9a4a47"/><rect x="13.22" y="12.94" width="4.46" height="1.49" fill="#eda35e"/><rect x="17.62" y="12.94" width="5.92" height="1.49" fill="#9a4a47"/><rect x="0.00" y="14.38" width="5.92" height="1.49" fill="#9a4a47"/><rect x="5.88" y="14.38" width="2.99" height="1.49" fill="#eda35e"/><rect x="8.81" y="14.38" width="1.52" height="1.49" fill="#c77a4b"/><rect x="10.28" y="14.38" width="1.52" height="1.49" fill="#9a4a47"/><rect x="11.75" y="14.38" width="1.52" height="1.49" fill="#c77a4b"/><rect x="13.22" y="14.38" width="2.99" height="1.49" fill="#eda35e"/><rect x="16.16" y="14.38" width="1.52" height="1.49" fill="#c77a4b"/><rect x="17.62" y="14.38" width="4.46" height="1.49" fill="#9a4a47"/><rect x="22.03" y="14.38" width="1.52" height="1.49" fill="#6a3455"/><rect x="0.00" y="15.81" width="7.39" height="1.49" fill="#9a4a47"/><rect x="7.34" y="15.81" width="2.99" height="1.49" fill="#c77a4b"/><rect x="10.28" y="15.81" width="2.99" height="1.49" fill="#9a4a47"/><rect x="13.22" y="15.81" width="7.39" height="1.49" fill="#c77a4b"/><rect x="20.56" y="15.81" width="1.52" height="1.49" fill="#9a4a47"/><rect x="22.03" y="15.81" width="1.52" height="1.49" fill="#6a3455"/><rect x="0.00" y="17.25" width="2.99" height="1.49" fill="#9a4a47"/><rect x="2.94" y="17.25" width="1.52" height="1.49" fill="#eda35e"/><rect x="4.41" y="17.25" width="1.52" height="1.49" fill="#c77a4b"/><rect x="5.88" y="17.25" width="2.99" height="1.49" fill="#9a4a47"/><rect x="8.81" y="17.25" width="2.99" height="1.49" fill="#6a3455"/><rect x="11.75" y="17.25" width="1.52" height="1.49" fill="#9a4a47"/><rect x="13.22" y="17.25" width="7.39" height="1.49" fill="#c77a4b"/><rect x="20.56" y="17.25" width="2.99" height="1.49" fill="#6a3455"/><rect x="0.00" y="18.69" width="1.52" height="1.49" fill="#9a4a47"/><rect x="1.47" y="18.69" width="1.52" height="1.49" fill="#6a3455"/><rect x="2.94" y="18.69" width="1.52" height="1.49" fill="#eda35e"/><rect x="4.41" y="18.69" width="1.52" height="1.49" fill="#c77a4b"/><rect x="5.88" y="18.69" width="2.99" height="1.49" fill="#9a4a47"/><rect x="8.81" y="18.69" width="2.99" height="1.49" fill="#6a3455"/><rect x="11.75" y="18.69" width="2.99" height="1.49" fill="#9a4a47"/><rect x="14.69" y="18.69" width="2.99" height="1.49" fill="#c77a4b"/><rect x="17.62" y="18.69" width="2.99" height="1.49" fill="#9a4a47"/><rect x="20.56" y="18.69" width="2.99" height="1.49" fill="#6a3455"/><rect x="0.00" y="20.12" width="1.52" height="1.49" fill="#6a3455"/><rect x="1.47" y="20.12" width="5.92" height="1.49" fill="#9a4a47"/><rect x="7.34" y="20.12" width="2.99" height="1.49" fill="#6a3455"/><rect x="10.28" y="20.12" width="8.86" height="1.49" fill="#9a4a47"/><rect x="19.09" y="20.12" width="4.46" height="1.49" fill="#6a3455"/><rect x="0.00" y="21.56" width="23.55" height="1.49" fill="#6a3455"/></g></pattern>
<g id="world">
<rect x="234" y="69" width="435" height="116" fill="#45f2ff"/>
<g id="clouds" shape-rendering="crispEdges">
<ellipse cx="266.0" cy="90.0" rx="15.0" ry="3.2" transform="rotate(-38 266.0 90.0)" fill="#8ff7ff"/>
<ellipse cx="258.0" cy="98.0" rx="12.0" ry="2.6" transform="rotate(-38 258.0 98.0)" fill="#8ff7ff"/>
<ellipse cx="272.0" cy="96.0" rx="9.0" ry="2.2" transform="rotate(-38 272.0 96.0)" fill="#8ff7ff"/>
<ellipse cx="246.0" cy="112.0" rx="8.0" ry="2.4" transform="rotate(-40 246.0 112.0)" fill="#8ff7ff"/>
<ellipse cx="252.0" cy="104.0" rx="5.0" ry="1.8" transform="rotate(-35 252.0 104.0)" fill="#8ff7ff"/>
<ellipse cx="262.0" cy="84.0" rx="5.0" ry="1.6" transform="rotate(-30 262.0 84.0)" fill="#8ff7ff"/>
<ellipse cx="322.0" cy="80.0" rx="9.0" ry="3.5" transform="rotate(-15 322.0 80.0)" fill="#8ff7ff"/>
<ellipse cx="335.0" cy="86.0" rx="10.0" ry="4.0" transform="rotate(-25 335.0 86.0)" fill="#8ff7ff"/>
<ellipse cx="318.0" cy="92.0" rx="7.0" ry="2.5" transform="rotate(-35 318.0 92.0)" fill="#8ff7ff"/>
<ellipse cx="352.0" cy="86.0" rx="14.0" ry="8.0" transform="rotate(-8 352.0 86.0)" fill="#8ff7ff"/>
<ellipse cx="366.0" cy="94.0" rx="10.0" ry="6.0" transform="rotate(-10 366.0 94.0)" fill="#8ff7ff"/>
<ellipse cx="345.0" cy="97.0" rx="8.0" ry="3.5" transform="rotate(0 345.0 97.0)" fill="#8ff7ff"/>
<ellipse cx="380.0" cy="83.0" rx="12.0" ry="2.5" transform="rotate(-32 380.0 83.0)" fill="#8ff7ff"/>
<ellipse cx="372.0" cy="79.0" rx="6.0" ry="1.8" transform="rotate(-25 372.0 79.0)" fill="#8ff7ff"/>
<ellipse cx="408.0" cy="80.0" rx="9.0" ry="3.0" transform="rotate(-25 408.0 80.0)" fill="#8ff7ff"/>
<ellipse cx="420.0" cy="78.0" rx="8.0" ry="3.5" transform="rotate(-15 420.0 78.0)" fill="#8ff7ff"/>
<ellipse cx="432.0" cy="74.0" rx="6.0" ry="3.0" transform="rotate(-20 432.0 74.0)" fill="#8ff7ff"/>
<ellipse cx="444.0" cy="80.0" rx="8.0" ry="4.0" transform="rotate(-5 444.0 80.0)" fill="#8ff7ff"/>
<ellipse cx="414.0" cy="90.0" rx="12.0" ry="3.0" transform="rotate(-35 414.0 90.0)" fill="#8ff7ff"/>
<ellipse cx="428.0" cy="92.0" rx="14.0" ry="3.2" transform="rotate(-30 428.0 92.0)" fill="#8ff7ff"/>
<ellipse cx="440.0" cy="99.0" rx="10.0" ry="3.0" transform="rotate(-30 440.0 99.0)" fill="#8ff7ff"/>
<ellipse cx="420.0" cy="104.0" rx="12.0" ry="2.6" transform="rotate(-32 420.0 104.0)" fill="#8ff7ff"/>
<ellipse cx="406.0" cy="98.0" rx="6.0" ry="2.0" transform="rotate(-35 406.0 98.0)" fill="#8ff7ff"/>
<ellipse cx="458.0" cy="79.0" rx="9.0" ry="3.5" transform="rotate(-15 458.0 79.0)" fill="#8ff7ff"/>
<ellipse cx="474.0" cy="82.0" rx="12.0" ry="3.0" transform="rotate(-28 474.0 82.0)" fill="#8ff7ff"/>
<ellipse cx="466.0" cy="90.0" rx="10.0" ry="2.6" transform="rotate(-30 466.0 90.0)" fill="#8ff7ff"/>
<ellipse cx="492.0" cy="80.0" rx="10.0" ry="2.6" transform="rotate(-28 492.0 80.0)" fill="#8ff7ff"/>
<ellipse cx="506.0" cy="84.0" rx="12.0" ry="3.0" transform="rotate(-30 506.0 84.0)" fill="#8ff7ff"/>
<ellipse cx="520.0" cy="79.0" rx="8.0" ry="2.4" transform="rotate(-25 520.0 79.0)" fill="#8ff7ff"/>
<ellipse cx="536.0" cy="81.0" rx="10.0" ry="3.0" transform="rotate(-25 536.0 81.0)" fill="#8ff7ff"/>
<ellipse cx="548.0" cy="78.0" rx="7.0" ry="2.2" transform="rotate(-20 548.0 78.0)" fill="#8ff7ff"/>
<ellipse cx="486.0" cy="92.0" rx="8.0" ry="2.0" transform="rotate(-30 486.0 92.0)" fill="#8ff7ff"/>
<ellipse cx="585.0" cy="80.0" rx="10.0" ry="2.4" transform="rotate(-22 585.0 80.0)" fill="#8ff7ff"/>
<ellipse cx="604.0" cy="78.0" rx="8.0" ry="2.2" transform="rotate(-20 604.0 78.0)" fill="#8ff7ff"/>
<ellipse cx="622.0" cy="81.0" rx="11.0" ry="2.6" transform="rotate(-22 622.0 81.0)" fill="#8ff7ff"/>
<ellipse cx="642.0" cy="79.0" rx="8.0" ry="2.2" transform="rotate(-18 642.0 79.0)" fill="#8ff7ff"/>
<ellipse cx="596.0" cy="88.0" rx="7.0" ry="1.8" transform="rotate(-25 596.0 88.0)" fill="#8ff7ff"/>
<ellipse cx="290.0" cy="105.0" rx="16.0" ry="11.0" transform="rotate(-12 290.0 105.0)" fill="#8ff7ff"/>
<ellipse cx="280.0" cy="116.0" rx="24.0" ry="8.0" transform="rotate(-15 280.0 116.0)" fill="#8ff7ff"/>
<ellipse cx="272.0" cy="128.0" rx="28.0" ry="7.0" transform="rotate(-12 272.0 128.0)" fill="#8ff7ff"/>
<ellipse cx="300.0" cy="124.0" rx="14.0" ry="6.0" transform="rotate(-15 300.0 124.0)" fill="#8ff7ff"/>
<ellipse cx="325.0" cy="115.0" rx="20.0" ry="8.0" transform="rotate(-14 325.0 115.0)" fill="#8ff7ff"/>
<ellipse cx="322.0" cy="129.0" rx="14.0" ry="4.5" transform="rotate(-18 322.0 129.0)" fill="#8ff7ff"/>
<ellipse cx="352.0" cy="118.0" rx="16.0" ry="8.0" transform="rotate(-10 352.0 118.0)" fill="#8ff7ff"/>
<ellipse cx="376.0" cy="112.0" rx="24.0" ry="9.0" transform="rotate(-14 376.0 112.0)" fill="#8ff7ff"/>
<ellipse cx="398.0" cy="118.0" rx="16.0" ry="8.0" transform="rotate(-10 398.0 118.0)" fill="#8ff7ff"/>
<ellipse cx="360.0" cy="128.0" rx="10.0" ry="3.0" transform="rotate(-20 360.0 128.0)" fill="#8ff7ff"/>
<ellipse cx="428.0" cy="116.0" rx="18.0" ry="9.0" transform="rotate(-18 428.0 116.0)" fill="#8ff7ff"/>
<ellipse cx="444.0" cy="108.0" rx="10.0" ry="7.0" transform="rotate(-20 444.0 108.0)" fill="#8ff7ff"/>
<ellipse cx="462.0" cy="112.0" rx="22.0" ry="11.0" transform="rotate(-14 462.0 112.0)" fill="#8ff7ff"/>
<ellipse cx="480.0" cy="106.0" rx="12.0" ry="6.0" transform="rotate(-20 480.0 106.0)" fill="#8ff7ff"/>
<ellipse cx="440.0" cy="126.0" rx="12.0" ry="5.0" transform="rotate(-20 440.0 126.0)" fill="#8ff7ff"/>
<ellipse cx="290.0" cy="104.0" rx="12.0" ry="8.0" transform="rotate(-12 290.0 104.0)" fill="#afeefb"/>
<ellipse cx="272.0" cy="117.0" rx="14.0" ry="5.0" transform="rotate(-15 272.0 117.0)" fill="#afeefb"/>
<ellipse cx="255.0" cy="127.0" rx="8.0" ry="5.0" transform="rotate(-15 255.0 127.0)" fill="#afeefb"/>
<ellipse cx="328.0" cy="112.0" rx="9.0" ry="4.0" transform="rotate(-15 328.0 112.0)" fill="#afeefb"/>
<ellipse cx="345.0" cy="121.0" rx="10.0" ry="3.0" transform="rotate(-20 345.0 121.0)" fill="#afeefb"/>
<ellipse cx="380.0" cy="108.0" rx="20.0" ry="7.0" transform="rotate(-14 380.0 108.0)" fill="#afeefb"/>
<ellipse cx="394.0" cy="117.0" rx="8.0" ry="5.0" transform="rotate(-10 394.0 117.0)" fill="#afeefb"/>
<ellipse cx="432.0" cy="114.0" rx="12.0" ry="5.0" transform="rotate(-20 432.0 114.0)" fill="#afeefb"/>
<ellipse cx="447.0" cy="106.0" rx="7.0" ry="5.0" transform="rotate(-20 447.0 106.0)" fill="#afeefb"/>
<ellipse cx="466.0" cy="110.0" rx="16.0" ry="7.0" transform="rotate(-14 466.0 110.0)" fill="#afeefb"/>
<ellipse cx="300.0" cy="122.0" rx="8.0" ry="3.0" transform="rotate(-15 300.0 122.0)" fill="#afeefb"/>
<ellipse cx="321.2" cy="108.2" rx="8.3" ry="1.5" transform="rotate(-35 321.2 108.2)" fill="#8ff7ff"/>
<ellipse cx="330.5" cy="105.6" rx="7.5" ry="1.4" transform="rotate(-25 330.5 105.6)" fill="#8ff7ff"/>
<ellipse cx="342.0" cy="110.7" rx="7.8" ry="1.5" transform="rotate(-35 342.0 110.7)" fill="#8ff7ff"/>
<ellipse cx="458.4" cy="121.7" rx="7.9" ry="1.5" transform="rotate(-26 458.4 121.7)" fill="#8ff7ff"/>
<ellipse cx="260.9" cy="110.2" rx="7.8" ry="1.5" transform="rotate(-25 260.9 110.2)" fill="#8ff7ff"/>
<ellipse cx="281.7" cy="107.3" rx="6.5" ry="2.2" transform="rotate(-33 281.7 107.3)" fill="#8ff7ff"/>
<ellipse cx="272.7" cy="120.0" rx="5.9" ry="1.5" transform="rotate(-36 272.7 120.0)" fill="#8ff7ff"/>
<ellipse cx="374.2" cy="121.3" rx="7.5" ry="1.9" transform="rotate(-28 374.2 121.3)" fill="#8ff7ff"/>
<ellipse cx="352.4" cy="129.9" rx="6.8" ry="1.6" transform="rotate(-33 352.4 129.9)" fill="#8ff7ff"/>
<ellipse cx="560.0" cy="92.0" rx="12.0" ry="7.0" transform="rotate(-15 560.0 92.0)" fill="#8ff7ff"/>
<ellipse cx="585.0" cy="108.0" rx="16.0" ry="8.0" transform="rotate(-15 585.0 108.0)" fill="#8ff7ff"/>
<ellipse cx="612.0" cy="104.0" rx="20.0" ry="9.0" transform="rotate(-15 612.0 104.0)" fill="#8ff7ff"/>
<ellipse cx="638.0" cy="108.0" rx="16.0" ry="9.0" transform="rotate(-15 638.0 108.0)" fill="#8ff7ff"/>
<ellipse cx="600.0" cy="120.0" rx="22.0" ry="7.0" transform="rotate(-15 600.0 120.0)" fill="#8ff7ff"/>
<ellipse cx="632.0" cy="122.0" rx="18.0" ry="6.0" transform="rotate(-15 632.0 122.0)" fill="#8ff7ff"/>
<ellipse cx="575.0" cy="124.0" rx="10.0" ry="5.0" transform="rotate(-15 575.0 124.0)" fill="#8ff7ff"/>
<ellipse cx="548.0" cy="102.0" rx="7.0" ry="3.0" transform="rotate(-30 548.0 102.0)" fill="#8ff7ff"/>
<ellipse cx="585.0" cy="107.0" rx="12.0" ry="6.0" transform="rotate(-18 585.0 107.0)" fill="#afeefb"/>
<ellipse cx="612.0" cy="103.0" rx="16.0" ry="6.5" transform="rotate(-18 612.0 103.0)" fill="#afeefb"/>
<ellipse cx="637.0" cy="107.0" rx="12.0" ry="6.0" transform="rotate(-18 637.0 107.0)" fill="#afeefb"/>
<ellipse cx="601.0" cy="120.0" rx="17.0" ry="5.0" transform="rotate(-18 601.0 120.0)" fill="#afeefb"/>
<ellipse cx="631.0" cy="122.0" rx="13.0" ry="4.0" transform="rotate(-18 631.0 122.0)" fill="#afeefb"/>
<ellipse cx="560.0" cy="92.0" rx="8.0" ry="4.0" transform="rotate(-18 560.0 92.0)" fill="#afeefb"/>
<ellipse cx="621.9" cy="97.8" rx="7.9" ry="2.0" transform="rotate(-26 621.9 97.8)" fill="#8ff7ff"/>
<ellipse cx="624.9" cy="99.5" rx="9.9" ry="1.5" transform="rotate(-23 624.9 99.5)" fill="#8ff7ff"/>
<ellipse cx="568.5" cy="101.7" rx="9.7" ry="1.9" transform="rotate(-34 568.5 101.7)" fill="#8ff7ff"/>
<ellipse cx="628.5" cy="110.9" rx="9.4" ry="1.8" transform="rotate(-25 628.5 110.9)" fill="#8ff7ff"/>
<ellipse cx="611.4" cy="111.2" rx="7.3" ry="2.4" transform="rotate(-28 611.4 111.2)" fill="#8ff7ff"/>
<ellipse cx="599.4" cy="114.6" rx="5.3" ry="2.2" transform="rotate(-22 599.4 114.6)" fill="#8ff7ff"/>
<ellipse cx="580.5" cy="103.4" rx="8.3" ry="1.4" transform="rotate(-22 580.5 103.4)" fill="#8ff7ff"/>
<ellipse cx="587.5" cy="112.4" rx="7.5" ry="1.7" transform="rotate(-27 587.5 112.4)" fill="#8ff7ff"/>
<ellipse cx="564.9" cy="97.9" rx="7.0" ry="2.4" transform="rotate(-34 564.9 97.9)" fill="#8ff7ff"/>
<ellipse cx="568.6" cy="104.1" rx="6.4" ry="1.6" transform="rotate(-23 568.6 104.1)" fill="#8ff7ff"/>
<rect x="234" y="166" width="435" height="18.5" fill="#bbeefb"/>
<polygon points="234.0,167.5 243.5,166.0 245.0,160.0 247.0,154.0 252.0,149.0 259.0,142.7 265.0,139.0 273.0,136.0 281.0,134.5 288.5,135.0 297.5,137.0 306.5,141.5 313.0,145.0 320.0,147.0 331.0,149.5 334.0,146.0 338.0,141.5 342.0,137.5 347.0,135.0 356.0,131.5 365.0,129.0 374.0,127.0 381.0,126.5 387.6,127.0 393.0,128.0 399.0,130.0 405.0,134.0 410.0,139.0 417.0,145.0 421.0,148.0 426.0,149.5 430.0,147.0 435.0,144.0 442.0,142.0 450.0,141.0 459.0,137.0 465.0,133.0 470.0,130.0 477.0,124.0 484.0,119.0 490.0,116.0 495.0,113.4 500.0,108.0 506.0,103.0 511.0,100.0 517.5,97.6 522.0,96.6 526.5,96.5 530.0,97.2 532.0,99.0 534.0,103.0 535.5,106.7 540.0,108.0 544.5,110.0 549.0,114.0 553.6,118.0 558.0,120.0 562.6,122.4 566.0,125.5 569.0,129.0 573.0,133.5 578.0,137.0 581.0,135.0 585.0,132.5 589.0,130.0 594.0,129.0 600.0,130.5 605.0,132.5 611.0,130.0 616.6,128.0 622.0,128.4 628.0,130.0 633.0,133.0 637.0,136.0 641.0,140.0 645.0,144.0 647.0,150.0 649.0,155.0 652.0,160.0 655.0,164.0 663.0,166.0 669.0,167.0 669.0,184.5 234.0,184.5" fill="#d9f4fe"/>
<circle cx="245.1" cy="162.1" r="3.8" fill="#d9f4fe"/>
<circle cx="252.3" cy="151.3" r="4.2" fill="#d9f4fe"/>
<circle cx="263.7" cy="141.7" r="4.8" fill="#d9f4fe"/>
<circle cx="282.0" cy="136.3" r="3.2" fill="#d9f4fe"/>
<circle cx="296.7" cy="139.1" r="3.9" fill="#d9f4fe"/>
<circle cx="312.9" cy="148.2" r="5.8" fill="#d9f4fe"/>
<circle cx="330.9" cy="152.5" r="5.4" fill="#d9f4fe"/>
<circle cx="337.0" cy="144.2" r="4.9" fill="#d9f4fe"/>
<circle cx="348.1" cy="137.7" r="4.9" fill="#d9f4fe"/>
<circle cx="365.7" cy="131.5" r="4.6" fill="#d9f4fe"/>
<circle cx="379.7" cy="129.2" r="4.9" fill="#d9f4fe"/>
<circle cx="393.3" cy="130.8" r="5.2" fill="#d9f4fe"/>
<circle cx="403.6" cy="136.2" r="4.0" fill="#d9f4fe"/>
<circle cx="416.9" cy="148.0" r="5.5" fill="#d9f4fe"/>
<circle cx="427.1" cy="152.3" r="5.1" fill="#d9f4fe"/>
<circle cx="436.3" cy="146.8" r="5.1" fill="#d9f4fe"/>
<circle cx="450.9" cy="143.3" r="4.2" fill="#d9f4fe"/>
<circle cx="466.3" cy="135.4" r="4.4" fill="#d9f4fe"/>
<circle cx="475.8" cy="127.0" r="5.5" fill="#d9f4fe"/>
<circle cx="489.2" cy="118.0" r="3.6" fill="#d9f4fe"/>
<circle cx="499.8" cy="111.1" r="5.7" fill="#d9f4fe"/>
<circle cx="510.4" cy="102.7" r="4.8" fill="#d9f4fe"/>
<circle cx="521.7" cy="99.1" r="4.5" fill="#d9f4fe"/>
<circle cx="530.3" cy="99.5" r="4.1" fill="#d9f4fe"/>
<circle cx="535.2" cy="105.6" r="4.7" fill="#d9f4fe"/>
<circle cx="541.3" cy="110.7" r="5.0" fill="#d9f4fe"/>
<circle cx="550.5" cy="117.0" r="5.4" fill="#d9f4fe"/>
<circle cx="557.0" cy="122.7" r="4.9" fill="#d9f4fe"/>
<circle cx="567.4" cy="128.5" r="5.4" fill="#d9f4fe"/>
<circle cx="573.2" cy="136.6" r="5.6" fill="#d9f4fe"/>
<circle cx="580.1" cy="137.8" r="5.1" fill="#d9f4fe"/>
<circle cx="589.2" cy="132.9" r="5.4" fill="#d9f4fe"/>
<circle cx="598.7" cy="132.7" r="3.9" fill="#d9f4fe"/>
<circle cx="612.5" cy="133.0" r="5.4" fill="#d9f4fe"/>
<circle cx="622.9" cy="130.3" r="3.4" fill="#d9f4fe"/>
<circle cx="632.0" cy="135.3" r="4.3" fill="#d9f4fe"/>
<circle cx="641.8" cy="142.2" r="4.0" fill="#d9f4fe"/>
<circle cx="645.6" cy="153.0" r="5.5" fill="#d9f4fe"/>
<circle cx="650.6" cy="162.6" r="4.8" fill="#d9f4fe"/>
<polygon points="462.0,184.5 470.0,176.0 480.0,172.0 494.0,167.0 508.0,166.0 517.0,163.0 522.0,155.0 531.0,150.0 541.0,145.0 552.0,143.0 560.0,139.0 566.0,136.0 572.0,145.0 579.0,151.0 588.0,155.0 600.0,158.0 612.0,156.0 624.0,154.0 636.0,155.0 645.0,159.0 652.0,164.0 657.0,166.5 669.0,167.5 669.0,184.5" fill="#bbeefb"/>
<ellipse cx="575.0" cy="160.0" rx="14.0" ry="2.5" transform="rotate(-20 575.0 160.0)" fill="#d9f4fe"/>
<ellipse cx="600.0" cy="163.0" rx="11.0" ry="2.0" transform="rotate(-15 600.0 163.0)" fill="#d9f4fe"/>
<ellipse cx="548.0" cy="158.0" rx="10.0" ry="2.0" transform="rotate(-25 548.0 158.0)" fill="#d9f4fe"/>
<ellipse cx="560.0" cy="170.0" rx="12.0" ry="2.0" transform="rotate(-10 560.0 170.0)" fill="#d9f4fe"/>
<ellipse cx="628.0" cy="160.0" rx="9.0" ry="2.0" transform="rotate(-20 628.0 160.0)" fill="#d9f4fe"/>
<ellipse cx="540.0" cy="172.0" rx="9.0" ry="1.8" transform="rotate(-10 540.0 172.0)" fill="#d9f4fe"/>
<ellipse cx="292.0" cy="150.0" rx="14.0" ry="5.0" transform="rotate(-10 292.0 150.0)" fill="#bbeefb"/>
<ellipse cx="318.0" cy="158.0" rx="12.0" ry="4.0" transform="rotate(15 318.0 158.0)" fill="#bbeefb"/>
<ellipse cx="275.0" cy="160.0" rx="10.0" ry="3.5" transform="rotate(-20 275.0 160.0)" fill="#bbeefb"/>
<ellipse cx="262.0" cy="170.0" rx="10.0" ry="3.0" transform="rotate(-10 262.0 170.0)" fill="#bbeefb"/>
<ellipse cx="300.0" cy="172.0" rx="16.0" ry="3.5" transform="rotate(5 300.0 172.0)" fill="#bbeefb"/>
<ellipse cx="345.0" cy="160.0" rx="11.0" ry="4.0" transform="rotate(-25 345.0 160.0)" fill="#bbeefb"/>
<ellipse cx="360.0" cy="150.0" rx="9.0" ry="4.0" transform="rotate(-30 360.0 150.0)" fill="#bbeefb"/>
<ellipse cx="380.0" cy="142.0" rx="10.0" ry="3.0" transform="rotate(-20 380.0 142.0)" fill="#bbeefb"/>
<ellipse cx="395.0" cy="160.0" rx="12.0" ry="4.0" transform="rotate(20 395.0 160.0)" fill="#bbeefb"/>
<ellipse cx="420.0" cy="165.0" rx="14.0" ry="4.0" transform="rotate(-10 420.0 165.0)" fill="#bbeefb"/>
<ellipse cx="372.0" cy="172.0" rx="16.0" ry="3.0" transform="rotate(0 372.0 172.0)" fill="#bbeefb"/>
<ellipse cx="440.0" cy="158.0" rx="10.0" ry="3.5" transform="rotate(-20 440.0 158.0)" fill="#bbeefb"/>
<ellipse cx="468.0" cy="150.0" rx="10.0" ry="3.0" transform="rotate(-30 468.0 150.0)" fill="#bbeefb"/>
<ellipse cx="490.0" cy="140.0" rx="9.0" ry="3.0" transform="rotate(-35 490.0 140.0)" fill="#bbeefb"/>
<ellipse cx="505.0" cy="125.0" rx="8.0" ry="2.5" transform="rotate(-40 505.0 125.0)" fill="#bbeefb"/>
<ellipse cx="455.0" cy="172.0" rx="14.0" ry="3.0" transform="rotate(-5 455.0 172.0)" fill="#bbeefb"/>
<ellipse cx="330.0" cy="170.0" rx="10.0" ry="2.5" transform="rotate(-10 330.0 170.0)" fill="#bbeefb"/>
<ellipse cx="515.0" cy="140.0" rx="7.0" ry="2.5" transform="rotate(-40 515.0 140.0)" fill="#bbeefb"/>
<ellipse cx="250.0" cy="160.0" rx="4.0" ry="6.0" transform="rotate(0 250.0 160.0)" fill="#bbeefb"/>
<ellipse cx="388.0" cy="159.9" rx="9.5" ry="2.2" transform="rotate(-3 388.0 159.9)" fill="#bbeefb"/>
<ellipse cx="514.5" cy="119.2" rx="8.8" ry="2.2" transform="rotate(4 514.5 119.2)" fill="#bbeefb"/>
<ellipse cx="495.0" cy="125.2" rx="5.8" ry="1.5" transform="rotate(5 495.0 125.2)" fill="#bbeefb"/>
<ellipse cx="259.2" cy="180.4" rx="9.8" ry="2.5" transform="rotate(4 259.2 180.4)" fill="#bbeefb"/>
<ellipse cx="450.1" cy="168.2" rx="9.0" ry="1.4" transform="rotate(-33 450.1 168.2)" fill="#bbeefb"/>
<ellipse cx="305.7" cy="155.3" rx="4.2" ry="2.2" transform="rotate(-7 305.7 155.3)" fill="#bbeefb"/>
<ellipse cx="431.6" cy="157.7" rx="5.4" ry="1.9" transform="rotate(-35 431.6 157.7)" fill="#bbeefb"/>
<ellipse cx="454.0" cy="161.6" rx="5.7" ry="3.2" transform="rotate(-30 454.0 161.6)" fill="#bbeefb"/>
<ellipse cx="468.3" cy="150.9" rx="5.4" ry="1.8" transform="rotate(-31 468.3 150.9)" fill="#bbeefb"/>
<ellipse cx="422.8" cy="157.4" rx="4.6" ry="1.9" transform="rotate(-31 422.8 157.4)" fill="#bbeefb"/>
<ellipse cx="246.2" cy="166.4" rx="9.5" ry="2.2" transform="rotate(-10 246.2 166.4)" fill="#bbeefb"/>
<ellipse cx="377.8" cy="160.1" rx="5.2" ry="2.6" transform="rotate(-14 377.8 160.1)" fill="#bbeefb"/>
<ellipse cx="273.4" cy="154.9" rx="9.8" ry="2.7" transform="rotate(-28 273.4 154.9)" fill="#bbeefb"/>
<ellipse cx="288.3" cy="169.3" rx="4.1" ry="2.2" transform="rotate(-4 288.3 169.3)" fill="#bbeefb"/>
<ellipse cx="301.8" cy="165.2" rx="6.7" ry="1.7" transform="rotate(-27 301.8 165.2)" fill="#bbeefb"/>
<ellipse cx="377.6" cy="151.3" rx="6.4" ry="3.2" transform="rotate(-35 377.6 151.3)" fill="#bbeefb"/>
<ellipse cx="330.7" cy="180.3" rx="8.8" ry="1.9" transform="rotate(-34 330.7 180.3)" fill="#bbeefb"/>
<ellipse cx="312.2" cy="162.6" rx="9.1" ry="2.5" transform="rotate(-29 312.2 162.6)" fill="#bbeefb"/>
<ellipse cx="259.2" cy="153.3" rx="6.6" ry="1.3" transform="rotate(4 259.2 153.3)" fill="#bbeefb"/>
<ellipse cx="349.3" cy="152.2" rx="4.4" ry="1.5" transform="rotate(2 349.3 152.2)" fill="#bbeefb"/>
<ellipse cx="445.9" cy="148.0" rx="6.2" ry="2.5" transform="rotate(-27 445.9 148.0)" fill="#bbeefb"/>
<ellipse cx="426.4" cy="177.6" rx="5.1" ry="1.6" transform="rotate(-21 426.4 177.6)" fill="#bbeefb"/>
<ellipse cx="502.8" cy="129.0" rx="5.1" ry="2.7" transform="rotate(0 502.8 129.0)" fill="#bbeefb"/>
<ellipse cx="307.7" cy="179.4" rx="9.3" ry="2.4" transform="rotate(-9 307.7 179.4)" fill="#bbeefb"/>
<ellipse cx="260.9" cy="151.2" rx="7.1" ry="1.8" transform="rotate(-10 260.9 151.2)" fill="#bbeefb"/>
<ellipse cx="326.7" cy="176.3" rx="7.6" ry="1.9" transform="rotate(-24 326.7 176.3)" fill="#bbeefb"/>
<ellipse cx="285.7" cy="160.1" rx="7.9" ry="2.5" transform="rotate(-31 285.7 160.1)" fill="#bbeefb"/>
<ellipse cx="334.0" cy="178.6" rx="5.2" ry="1.3" transform="rotate(-18 334.0 178.6)" fill="#bbeefb"/>
<ellipse cx="375.2" cy="144.9" rx="4.3" ry="1.8" transform="rotate(-2 375.2 144.9)" fill="#bbeefb"/>
<ellipse cx="425.7" cy="158.8" rx="6.2" ry="3.0" transform="rotate(-14 425.7 158.8)" fill="#bbeefb"/>
<ellipse cx="452.3" cy="170.2" rx="7.5" ry="1.6" transform="rotate(-33 452.3 170.2)" fill="#bbeefb"/>
<ellipse cx="536.0" cy="145.2" rx="6.1" ry="1.9" transform="rotate(-33 536.0 145.2)" fill="#bbeefb"/>
<ellipse cx="252.7" cy="171.3" rx="6.9" ry="2.7" transform="rotate(-15 252.7 171.3)" fill="#bbeefb"/>
<ellipse cx="288.9" cy="144.0" rx="6.7" ry="2.0" transform="rotate(-33 288.9 144.0)" fill="#bbeefb"/>
<ellipse cx="467.0" cy="172.1" rx="9.5" ry="2.0" transform="rotate(-5 467.0 172.1)" fill="#bbeefb"/>
<ellipse cx="377.0" cy="170.9" rx="9.2" ry="2.4" transform="rotate(4 377.0 170.9)" fill="#bbeefb"/>
<ellipse cx="454.0" cy="158.8" rx="4.1" ry="1.4" transform="rotate(-30 454.0 158.8)" fill="#bbeefb"/>
<ellipse cx="446.8" cy="180.8" rx="9.3" ry="2.7" transform="rotate(-11 446.8 180.8)" fill="#bbeefb"/>
<ellipse cx="389.7" cy="155.4" rx="7.2" ry="2.3" transform="rotate(-3 389.7 155.4)" fill="#bbeefb"/>
<ellipse cx="255.4" cy="169.4" rx="6.9" ry="1.7" transform="rotate(-28 255.4 169.4)" fill="#bbeefb"/>
<ellipse cx="402.1" cy="164.5" rx="9.5" ry="1.8" transform="rotate(-35 402.1 164.5)" fill="#bbeefb"/>
<ellipse cx="361.5" cy="142.4" rx="7.7" ry="2.3" transform="rotate(-14 361.5 142.4)" fill="#bbeefb"/>
<ellipse cx="453.2" cy="161.2" rx="9.4" ry="1.9" transform="rotate(-19 453.2 161.2)" fill="#bbeefb"/>
<ellipse cx="308.3" cy="162.5" rx="8.8" ry="3.0" transform="rotate(-22 308.3 162.5)" fill="#bbeefb"/>
<ellipse cx="366.7" cy="161.7" rx="5.9" ry="1.6" transform="rotate(-4 366.7 161.7)" fill="#bbeefb"/>
<ellipse cx="356.1" cy="176.5" rx="4.2" ry="1.4" transform="rotate(-18 356.1 176.5)" fill="#bbeefb"/>
</g>
<g shape-rendering="crispEdges"><rect x="234" y="184.00" width="435" height="132.05" fill="#2db8fb"/><rect x="234" y="184.00" width="435" height="1.25" fill="#8ff8e8"/><rect x="234" y="185.20" width="435" height="5.85" fill="#88f7dc"/><line x1="234" x2="669" y1="187.40" y2="187.40" stroke="#30e6ff" stroke-width="1.30" stroke-dasharray="9 14 7 22 12 17" stroke-dashoffset="0"/><line x1="234" x2="669" y1="188.80" y2="188.80" stroke="#30e6ff" stroke-width="1.40" stroke-dasharray="14 13 8 15 22 9" stroke-dashoffset="11"/><rect x="234" y="191.00" width="435" height="1.85" fill="#2cd2fe"/><rect x="234" y="192.80" width="435" height="2.15" fill="#2fdcff"/><line x1="234" x2="669" y1="193.40" y2="193.40" stroke="#2cc6fd" stroke-width="1.10" stroke-dasharray="21 17 9 30" stroke-dashoffset="4"/><rect x="234" y="194.90" width="435" height="1.85" fill="#2cc4fc"/><line x1="234" x2="669" y1="195.60" y2="195.60" stroke="#9eeec0" stroke-width="1.00" stroke-dasharray="3 21 3 15 2 27 3 19" stroke-dashoffset="3"/><rect x="234" y="196.70" width="435" height="2.35" fill="#2edcff"/><line x1="234" x2="669" y1="197.90" y2="197.90" stroke="#2cc4fc" stroke-width="1.20" stroke-dasharray="25 13 18 9" stroke-dashoffset="5"/><rect x="234" y="199.00" width="435" height="1.55" fill="#2cc4fc"/><line x1="234" x2="669" y1="199.60" y2="199.60" stroke="#2edcff" stroke-width="1.20" stroke-dasharray="16 21 9 31" stroke-dashoffset="9"/><rect x="234" y="200.50" width="435" height="2.15" fill="#2dd6ff"/><rect x="234" y="202.60" width="435" height="2.05" fill="#2cbefb"/><line x1="234" x2="669" y1="203.70" y2="203.70" stroke="#55ecff" stroke-width="1.50" stroke-dasharray="7 9 4 13 10 15" stroke-dashoffset="2"/><rect x="234" y="204.60" width="435" height="4.45" fill="#2dd5ff"/><rect x="234" y="209.00" width="435" height="3.05" fill="#2aaef8"/><line x1="234" x2="669" y1="209.60" y2="209.60" stroke="#2dd5ff" stroke-width="1.30" stroke-dasharray="22 30 12 25" stroke-dashoffset="14"/><rect x="234" y="212.00" width="435" height="2.05" fill="#2ccbfd"/><line x1="234" x2="669" y1="212.70" y2="212.70" stroke="#55e8ff" stroke-width="1.30" stroke-dasharray="9 27 5 33" stroke-dashoffset="20"/><rect x="234" y="214.00" width="435" height="2.55" fill="#2ab0f9"/><rect x="234" y="216.50" width="435" height="2.15" fill="#2dc8fd"/><line x1="234" x2="669" y1="217.40" y2="217.40" stroke="#4fe6ff" stroke-width="1.50" stroke-dasharray="20 8 12 19 26 14" stroke-dashoffset="6"/><rect x="234" y="218.60" width="435" height="7.95" fill="#2db8fb"/><rect x="234" y="226.50" width="435" height="4.55" fill="#2dcbfe"/><line x1="234" x2="669" y1="227.20" y2="227.20" stroke="#2db8fb" stroke-width="1.40" stroke-dasharray="18 33 22 41" stroke-dashoffset="0"/><line x1="234" x2="669" y1="230.30" y2="230.30" stroke="#2db8fb" stroke-width="1.40" stroke-dasharray="30 24 45 16" stroke-dashoffset="25"/></g>
<rect x="244" y="292" width="417" height="23" fill="url(#gtile)"/>
<use href="#frog" x="254" y="250"/>
</g>
</defs>
</svg>
<!-- main scene view -->
<svg style="left:234px;top:69px" width="435" height="247" viewBox="234 69 435 247">
<use href="#world"/>
<!-- tiny white cloud gizmo -->
<g fill="#f2f2f2" shape-rendering="crispEdges"><ellipse cx="447.600" cy="198.800" rx="4.200" ry="4.200"/><ellipse cx="453.400" cy="195.600" rx="4" ry="4.600"/><rect x="446.500" y="197" width="12.500" height="8" rx="2.500"/><rect x="456" y="199" width="6.800" height="4.300" rx="0.800"/><ellipse cx="451" cy="188.900" rx="1.900" ry="1.700"/></g>
<g fill="none" stroke="#e9f6fa" stroke-opacity=".85" shape-rendering="crispEdges"><path d="M243.5 316V80.5H661.5V316" stroke-width="1"/></g>
<rect x="244" y="315" width="418" height="1.4" fill="#d6d9d9"/>
</svg>
<div class="abs" style="left:243px;top:316px;width:419px;height:1px;background:#bfc2c2"></div>
<!-- ===== tools overlay (left) ===== -->
<div class="abs" style="left:1px;top:50px;width:43px;height:147px;background:#111;border-radius:4px"></div>
<div class="abs" style="left:15px;top:56px;width:16px;height:1px;background:#8a8a8a"></div>
<div class="abs" style="left:15px;top:59px;width:16px;height:1px;background:#8a8a8a"></div>
<div class="btn" style="left:4px;top:68px;width:37px;height:20px;border-radius:3px 3px 0 0"></div>
<div class="btn" style="left:4px;top:89px;width:37px;height:20px;border-radius:0"></div>
<div class="btn" style="left:4px;top:110px;width:37px;height:20px;border-radius:0"></div>
<div class="btn" style="left:4px;top:131px;width:37px;height:20px;border-radius:0"></div>
<div class="btn on" style="left:4px;top:152px;width:37px;height:20px;border-radius:0"></div>
<div class="btn" style="left:4px;top:173px;width:37px;height:20px;border-radius:0 0 3px 3px"></div>
<!-- ===== bottom overlay toolbar ===== -->
<div class="abs" style="left:1px;top:335px;width:283px;height:26px;background:#111;border-radius:4px"></div>
<div class="abs" style="left:6px;top:339px;width:1px;height:19px;background:#6a6a6a"></div>
<div class="abs" style="left:9px;top:339px;width:1px;height:19px;background:#6a6a6a"></div>
<div class="btn on" style="left:17px;top:338px;width:32px;height:20px;border-radius:2px 0 0 2px"></div>
<div class="btn on" style="left:50px;top:338px;width:32px;height:20px;border-radius:0"></div>
<div class="btn on" style="left:83px;top:338px;width:32px;height:20px;border-radius:0"></div>
<div class="btn on" style="left:116px;top:338px;width:32px;height:20px;border-radius:0"></div>
<div class="btn on" style="left:149px;top:338px;width:32px;height:20px;border-radius:0"></div>
<div class="btn" style="left:182px;top:338px;width:32px;height:20px;border-radius:0"></div>
<div class="btn on" style="left:215px;top:338px;width:32px;height:20px;border-radius:0"></div>
<div class="btn" style="left:248px;top:338px;width:32px;height:20px;border-radius:0 2px 2px 0"></div>
<!-- ===== cameras overlay ===== -->
<div class="abs" style="left:720px;top:181px;width:250px;height:179px;background:#111;border-radius:4px"></div>
<div class="abs" style="left:725px;top:187px;width:16px;height:1px;background:#8a8a8a"></div>
<div class="abs" style="left:725px;top:190px;width:16px;height:1px;background:#8a8a8a"></div>
<div class="t" style="left:746px;top:182px">Cameras</div>
<div class="btn" style="left:725px;top:197px;width:163px;height:20px"></div>
<div class="t" style="left:771px;top:200px">Main Camera</div>
<div class="btn" style="left:892px;top:197px;width:32px;height:20px"></div>
<div class="btn" style="left:928px;top:197px;width:23px;height:20px;border-radius:2px 0 0 2px"></div>
<div class="btn" style="left:952px;top:197px;width:13px;height:20px;border-radius:0 2px 2px 0"></div>
<svg style="left:723px;top:220px" width="244" height="137" viewBox="243.5 80.5 418 234.5" preserveAspectRatio="none"><use href="#world"/></svg>
<!-- ===== tools overlay icons ===== -->
<svg style="left:15px;top:70px" width="16" height="16" viewBox="0 0 16 16"><path d="M4.200 15C3.200 12 1.600 9.800 0.400 7.600Q1.200 6.300 2.500 7.500L4.200 9.300L3.500 2.600Q4.500 1.600 5.200 2.800L6.100 7.200L6.300 0.900Q7.300 0 8.100 0.900L8.400 7.200L9.700 1.600Q10.700 0.900 11.300 2L10.700 7.800L13.300 4.400Q14.400 4.200 14.500 5.300C13.400 8.500 12.600 12 11.800 15Z" fill="#c8c8c8"/></svg>
<svg style="left:14px;top:90px" width="18" height="18" viewBox="0 0 18 18" fill="none" stroke="#9e9e9e" stroke-width="1.300"><path d="M9 1V7M9 11V17M1 9H7M11 9H17"/><path d="M6.500 3.500L9 1L11.500 3.500M6.500 14.500L9 17L11.500 14.500M3.500 6.500L1 9L3.500 11.500M14.500 6.500L17 9L14.500 11.500"/></svg>
<svg style="left:15px;top:112px" width="16" height="16" viewBox="0 0 16 16" fill="none" stroke="#d0d0d0" stroke-width="1.200"><path d="M6.500 1.200A7 7 0 0 0 3.800 13.800M9.500 14.800A7 7 0 0 0 12.500 2.200"/><path d="M1.200 13.900H4.300V10.800M14.600 2.100H11.600V5.100"/></svg>
<svg style="left:16px;top:134px" width="14" height="14" viewBox="0 0 14 14" fill="none" stroke="#d0d0d0" stroke-width="1.200"><rect x="0.600" y="0.600" width="12.800" height="12.800" rx="0.800"/><rect x="0.600" y="9.200" width="4.200" height="4.200"/><path d="M6.300 7.700L10.800 3.200M7.300 3H11V6.700"/></svg>
<svg style="left:16px;top:155px" width="14" height="14" viewBox="0 0 14 14"><g fill="#fff"><rect x="0" y="0" width="3" height="3"/><rect x="11" y="0" width="3" height="3"/><rect x="0" y="11" width="3" height="3"/><rect x="11" y="11" width="3" height="3"/></g><path d="M4.300 1.500H9.700M4.300 12.500H9.700M1.500 4.300V9.700M12.500 4.300V9.700" stroke="#fff" stroke-width="1.200"/></svg>
<svg style="left:14px;top:174px" width="18" height="18" viewBox="0 0 18 18" fill="none" stroke="#c4c4c4" stroke-width="1.100"><circle cx="9" cy="9" r="6.900" stroke-dasharray="8.500 2.300" stroke-dashoffset="4"/><path d="M9 4V14M4 9H14" stroke="#a8a8a8" stroke-width="2.200"/><path d="M7 5.500L9 3.500L11 5.500M7 12.500L9 14.500L11 12.500M5.500 7L3.500 9L5.500 11M12.500 7L14.500 9L12.500 11" stroke="#a8a8a8"/><path d="M13.800 0.800H17.200V4.200ZM0.800 13.800V17.200H4.200Z" fill="#d8d8d8" stroke="none"/></svg>
<!-- ===== bottom overlay icons ===== -->
<svg style="left:26px;top:341px" width="14" height="14" viewBox="0 0 14 14"><g fill="#c8c8c8"><rect x="0" y="0" width="3" height="3"/><rect x="11" y="0" width="3" height="3"/><rect x="0" y="11" width="3" height="3"/><rect x="11" y="11" width="3" height="3"/></g><path d="M4.300 1.500H9.700M4.300 12.500H9.700M1.500 4.300V9.700M12.500 4.300V9.700" stroke="#c8c8c8" stroke-width="1.200"/></svg>
<svg style="left:60px;top:341px" width="12" height="14" viewBox="0 0 12 14"><rect x="0.500" y="0.500" width="11" height="4.300" rx="0.800" fill="none" stroke="#d0d0d0" stroke-width="1"/><rect x="0.500" y="0.500" width="6" height="4.300" fill="#d0d0d0"/><path d="M0 8.300H12M0 12.200H12" stroke="#d0d0d0" stroke-width="1.200"/><path d="M4.300 6.300V10.300M8.300 10.200V14" stroke="#d0d0d0" stroke-width="1.700"/></svg>
<svg style="left:92px;top:341px" width="15" height="14" viewBox="0 0 15 14" fill="none"><path d="M3 0V10M6.200 0V13M9.300 3V13.500M12.300 4V13.500M0 2.800H10M0 6H13.500M2 9.200H13.500M5 12.300H13.500" stroke="#d0d0d0" stroke-width="1.100"/><path d="M0.500 13.500L13.500 0.500" stroke="#46607c" stroke-width="3"/><path d="M0.500 13.500L13.500 0.500" stroke="#a9d9c0" stroke-width="1"/></svg>
<svg style="left:125px;top:341px" width="14" height="14" viewBox="0 0 14 14"><circle cx="7" cy="7" r="6.900" fill="#c8c8c8"/><circle cx="6.100" cy="6.100" r="4.900" fill="#46607c"/></svg>
<svg style="left:157px;top:340px" width="16" height="16" viewBox="0 0 16 16"><circle cx="3.600" cy="3.300" r="2.500" fill="#d0d0d0"/><path d="M8.200 6.200L15 10.300L8.200 14.500L1.400 10.300Z" fill="none" stroke="#d0d0d0" stroke-width="1.100"/><path d="M4.800 8.200L11.600 12.400M11.600 8.200L4.800 12.400" stroke="#d0d0d0" stroke-width="1"/></svg>
<svg style="left:190px;top:341px" width="15" height="15" viewBox="0 0 15 15" fill="none" stroke="#d8d8d8"><circle cx="5.600" cy="5.600" r="4.300" stroke-width="1.300"/><path d="M8.800 8.800L13.600 13.600" stroke-width="2"/></svg>
<svg style="left:224px;top:341px" width="14" height="15" viewBox="0 0 14 15"><rect x="0" y="0.300" width="8.600" height="6.700" rx="1" fill="#d4d4d4"/><path d="M9 2.600L12.300 0.500V6.800L9 4.700Z" fill="#d4d4d4"/><path d="M4 11.300Q8.600 5.800 13.400 11.300Q8.600 16.800 4 11.300Z" fill="#46607c" stroke="#e4e4e4" stroke-width="1.100"/><circle cx="8.700" cy="11.300" r="1.900" fill="#e4e4e4"/></svg>
<svg style="left:257px;top:342px" width="15" height="12" viewBox="0 0 15 12" fill="none" stroke="#d0d0d0" stroke-width="1.200"><path d="M0 2.200H3.200Q5 2.200 6.200 4L8 8Q9.200 9.800 11 9.800H13.500M0 9.800H3.200Q5 9.800 6.200 8M8 4Q9.200 2.200 11 2.200H13.500"/><path d="M11.200 0L14.200 2.200L11.200 4.400ZM11.200 7.600L14.200 9.800L11.200 12Z" fill="#d0d0d0" stroke="none"/></svg>
<!-- ===== cameras overlay icons ===== -->
<svg style="left:730px;top:202px" width="14" height="10" viewBox="0 0 14 10" fill="#7ad5f7"><rect x="0" y="0.300" width="9" height="9.400" rx="0.800"/><path d="M10 3.600L13.200 1.200V8.800L10 6.400Z"/></svg>
<svg style="left:873px;top:204px" width="9" height="6" viewBox="0 0 9 6"><path d="M0 0H9L4.500 5.500Z" fill="#c4c4c4"/></svg>
<svg style="left:902px;top:201px" width="12" height="12" viewBox="0 0 12 12"><circle cx="6" cy="6" r="5.700" fill="#e0e0e0"/><rect x="5.100" y="5" width="1.900" height="4.500" fill="#585858"/><circle cx="6" cy="3.100" r="1.100" fill="#585858"/></svg>
<svg style="left:933px;top:200px" width="14" height="14" viewBox="0 0 14 14" fill="none" stroke="#dcdcdc" stroke-width="1.300"><path d="M0.700 4.300V0.700H4.300M9.700 0.700H13.300V4.300M13.300 9.700V13.300H9.700M4.300 13.300H0.700V9.700"/><rect x="4" y="4" width="6" height="6"/></svg>
<svg style="left:954px;top:204px" width="9" height="6" viewBox="0 0 9 6"><path d="M0 0H9L4.500 5.500Z" fill="#c4c4c4"/></svg>
<!-- ===== Animation window ===== -->
<div class="abs" style="left:0;top:363px;width:977px;height:26px;background:#151515"></div>
<div class="abs" style="left:0;top:365px;width:97px;height:24px;background:#3c3c3c;border-radius:3px 3px 0 0"></div>
<div class="t" style="left:24px;top:371px">Animation</div>
<svg style="left:8px;top:372px" width="12" height="12" viewBox="0 0 12 12"><circle cx="6" cy="6" r="6" fill="#c8c8c8"/><path d="M6 2.2V6.4H9.6" fill="none" stroke="#3c3c3c" stroke-width="1.4"/></svg>
<div class="abs" style="left:0;top:389px;width:977px;height:158px;background:#383838"></div>
<div class="abs" style="left:0;top:389px;width:299px;height:20px;background:#3c3c3c"></div>
<div class="abs" style="left:0;top:409px;width:299px;height:1px;background:#232323"></div>
<div class="abs" style="left:0;top:410px;width:299px;height:20px;background:#3c3c3c"></div>
<div class="abs" style="left:0;top:430px;width:299px;height:1px;background:#2b2b2b"></div>
<div class="abs" style="left:0;top:431px;width:299px;height:18px;background:#3a3a3a"></div>
<div class="abs" style="left:0;top:449px;width:299px;height:36px;background:#4d4d4d"></div>
<div class="abs" style="left:0;top:485px;width:299px;height:42px;background:#383838"></div>
<div class="abs" style="left:0;top:527px;width:299px;height:19.500px;background:#383838;border-top:1px solid #2a2a2a"></div>
<div class="t" style="left:4px;top:392px">Preview</div>
<div class="abs" style="left:54px;top:389px;width:1px;height:20px;background:#2a2a2a"></div>
<div class="abs" style="left:80px;top:389px;width:1px;height:20px;background:#2a2a2a"></div>
<div class="abs" style="left:106px;top:389px;width:1px;height:20px;background:#2a2a2a"></div>
<div class="abs" style="left:132px;top:389px;width:1px;height:20px;background:#2a2a2a"></div>
<div class="abs" style="left:158px;top:389px;width:1px;height:20px;background:#2a2a2a"></div>
<div class="abs" style="left:184px;top:389px;width:1px;height:20px;background:#2a2a2a"></div>
<div class="abs" style="left:210px;top:389px;width:1px;height:20px;background:#2a2a2a"></div>
<svg style="left:59px;top:391px" width="16" height="16" viewBox="0 0 16 16"><circle cx="8" cy="8" r="6.8" fill="none" stroke="#d0d0d0" stroke-width="1.2"/><circle cx="8" cy="8" r="4.6" fill="#e8955a"/></svg>
<svg style="left:86px;top:393px" width="14" height="12" viewBox="0 0 14 12" fill="#c8c8c8"><rect x="0" y="1" width="2" height="10"/><path d="M8 1V11L2 6ZM14 1V11L8 6Z"/></svg>
<svg style="left:114px;top:393px" width="11" height="12" viewBox="0 0 11 12" fill="#c8c8c8"><rect x="0" y="1" width="2" height="10"/><path d="M10.5 0.5V11.5L3 6Z"/></svg>
<svg style="left:140px;top:393px" width="10" height="12" viewBox="0 0 10 12" fill="#c8c8c8"><path d="M0.5 0.5V11.5L9.5 6Z"/></svg>
<svg style="left:165px;top:393px" width="11" height="12" viewBox="0 0 11 12" fill="#c8c8c8"><rect x="9" y="1" width="2" height="10"/><path d="M0.5 0.5V11.5L8 6Z"/></svg>
<svg style="left:190px;top:393px" width="14" height="12" viewBox="0 0 14 12" fill="#c8c8c8"><rect x="12" y="1" width="2" height="10"/><path d="M0 1V11L6 6ZM6 1V11L12 6Z"/></svg>
<div class="abs" style="left:261px;top:391px;width:35px;height:16px;background:#2a2a2a;border:1px solid #212121;border-radius:3px"></div>
<div class="t" style="left:265px;top:392px">0</div>
<div class="t" style="left:2px;top:413px">idle</div>
<svg style="left:113px;top:418px" width="9" height="5" viewBox="0 0 9 5"><path d="M0 0H9L4.5 5Z" fill="#c8c8c8"/></svg>
<div class="abs" style="left:126px;top:410px;width:1px;height:20px;background:#2a2a2a"></div>
<div class="t" style="left:129px;top:413px">Samples</div>
<div class="abs" style="left:183px;top:412px;width:35px;height:16px;background:#2a2a2a;border:1px solid #212121;border-radius:3px"></div>
<div class="t" style="left:187px;top:413px">12</div>
<div class="abs" style="left:221px;top:410px;width:26px;height:20px;background:#39597a"></div>
<svg style="left:226px;top:412px" width="16" height="16" viewBox="0 0 16 16" fill="none" stroke="#6fd9c8" stroke-width="1.3"><circle cx="8" cy="8" r="3.6"/><path d="M8 1V4.4M8 11.6V15M1 8H4.4M11.6 8H15"/><circle cx="8" cy="8" r="0.8" fill="#6fd9c8" stroke="none"/></svg>
<div class="abs" style="left:247px;top:410px;width:1px;height:20px;background:#2a2a2a"></div>
<div class="abs" style="left:272px;top:410px;width:1px;height:20px;background:#2a2a2a"></div>
<svg style="left:251px;top:413px" width="18" height="14" viewBox="0 0 18 14"><path d="M5.5 1L10.5 6L5.5 11L0.5 6Z" fill="#ececec"/><path d="M13.5 7V13M10.5 10H16.5" stroke="#ececec" stroke-width="1.2"/></svg>
<svg style="left:279px;top:412px" width="16" height="16" viewBox="0 0 16 16"><path d="M1.5 1H6.5V11L4 14L1.5 11Z" fill="#ececec"/><path d="M11.5 8V14M8.5 11H14.5" stroke="#ececec" stroke-width="1.2"/></svg>
<svg style="left:3px;top:463px" width="9" height="8" viewBox="0 0 9 8"><path d="M0 0H9L4.5 7.5Z" fill="#7a7a7a"/></svg>
<svg style="left:16px;top:460px" width="11" height="11" viewBox="0 0 14 14" fill="none" stroke="#d8d8d8" stroke-width="1.5"><path d="M1 4V1H4M10 1H13V4M1 10V13H4M13 10V13H10"/><circle cx="7" cy="6" r="2.600" fill="#d8d8d8"/><path d="M3.500 11.500C5 8.800 9 8.800 10.500 11.500" stroke-width="1.800"/></svg>
<div class="t" style="left:29px;top:459px">player : Sprite</div>
<div class="abs" style="left:279px;top:464px;width:8px;height:5px;background:#e0e0e0;border-radius:50%"></div>
<div class="abs" style="left:34px;top:495px;width:230px;height:20px;background:#585858;border:1px solid #2e2e2e;border-radius:3px"></div>
<div class="t" style="left:111.500px;top:498.500px;letter-spacing:.15px">Add Property</div>
<div class="abs" style="left:139px;top:527px;width:79px;height:19.500px;background:#4b4b4b"></div>
<div class="abs" style="left:218px;top:527px;width:1px;height:19.500px;background:#2a2a2a"></div>
<div class="abs" style="left:219px;top:528px;width:80px;height:18.500px;background:#3c3c3c"></div>
<div class="t" style="left:147px;top:531px;letter-spacing:.1px">Dopesheet</div>
<div class="t" style="left:238px;top:531px">Curves</div>
<div class="abs" style="left:299px;top:389px;width:1px;height:156px;background:#262626"></div>
<div class="abs" style="left:300px;top:389px;width:659px;height:20px;background:#3c3c3c"></div>
<div class="abs" style="left:300px;top:409px;width:659px;height:1px;background:#222"></div>
<div class="abs" style="left:300px;top:410px;width:659px;height:20px;background:#303030"></div>
<div class="abs" style="left:300px;top:430px;width:659px;height:19px;background:#353535"></div>
<div class="abs" style="left:300px;top:449px;width:659px;height:97px;background:#373737"></div>
<div class="abs" style="left:300px;top:449px;width:658px;height:35px;border:1px solid #505050;background:#3a3a3a"></div>
<div class="abs" style="left:959px;top:389px;width:18px;height:159px;background:#383838"></div>
<div class="t" style="left:341.2px;top:392px;font-size:11.5px;color:#8c8c8c">0:00</div>
<div class="t" style="left:394.0px;top:392px;font-size:11.5px;color:#8c8c8c">0:01</div>
<div class="abs" style="left:391px;top:400px;width:1px;height:9px;background:#c0c0c0"></div>
<div class="abs" style="left:391px;top:449px;width:1px;height:86px;background:#585858"></div>
<div class="t" style="left:446.8px;top:392px;font-size:11.5px;color:#8c8c8c">0:02</div>
<div class="abs" style="left:444px;top:397px;width:1px;height:12px;background:#c0c0c0"></div>
<div class="abs" style="left:444px;top:449px;width:1px;height:86px;background:#585858"></div>
<div class="t" style="left:499.6px;top:392px;font-size:11.5px;color:#8c8c8c">0:03</div>
<div class="abs" style="left:496px;top:400px;width:1px;height:9px;background:#c0c0c0"></div>
<div class="abs" style="left:496px;top:449px;width:1px;height:86px;background:#585858"></div>
<div class="t" style="left:552.4px;top:392px;font-size:11.5px;color:#8c8c8c">0:04</div>
<div class="abs" style="left:549px;top:397px;width:1px;height:12px;background:#c0c0c0"></div>
<div class="abs" style="left:549px;top:449px;width:1px;height:86px;background:#585858"></div>
<div class="t" style="left:605.2px;top:392px;font-size:11.5px;color:#8c8c8c">0:05</div>
<div class="abs" style="left:602px;top:400px;width:1px;height:9px;background:#c0c0c0"></div>
<div class="abs" style="left:602px;top:449px;width:1px;height:86px;background:#585858"></div>
<div class="t" style="left:658.0px;top:392px;font-size:11.5px;color:#8c8c8c">0:06</div>
<div class="abs" style="left:655px;top:397px;width:1px;height:12px;background:#c0c0c0"></div>
<div class="abs" style="left:655px;top:449px;width:1px;height:86px;background:#585858"></div>
<div class="t" style="left:710.8px;top:392px;font-size:11.5px;color:#8c8c8c">0:07</div>
<div class="abs" style="left:708px;top:400px;width:1px;height:9px;background:#c0c0c0"></div>
<div class="abs" style="left:708px;top:449px;width:1px;height:86px;background:#585858"></div>
<div class="t" style="left:763.6px;top:392px;font-size:11.5px;color:#8c8c8c">0:08</div>
<div class="abs" style="left:760px;top:397px;width:1px;height:12px;background:#c0c0c0"></div>
<div class="abs" style="left:760px;top:449px;width:1px;height:86px;background:#585858"></div>
<div class="t" style="left:816.4px;top:392px;font-size:11.5px;color:#8c8c8c">0:09</div>
<div class="abs" style="left:813px;top:400px;width:1px;height:9px;background:#c0c0c0"></div>
<div class="abs" style="left:813px;top:449px;width:1px;height:86px;background:#585858"></div>
<div class="t" style="left:869.2px;top:392px;font-size:11.5px;color:#8c8c8c">0:10</div>
<div class="abs" style="left:866px;top:397px;width:1px;height:12px;background:#c0c0c0"></div>
<div class="abs" style="left:866px;top:449px;width:1px;height:86px;background:#585858"></div>
<div class="t" style="left:922.0px;top:392px;font-size:11.5px;color:#5a5a5a">0:11</div>
<div class="abs" style="left:919px;top:400px;width:1px;height:9px;background:#6a6a6a"></div>
<div class="abs" style="left:919px;top:449px;width:1px;height:86px;background:#585858"></div>
<svg style="left:333.0px;top:434px" width="11" height="11" viewBox="0 0 11 11"><path d="M5.5 0.6L10.4 5.5L5.5 10.4L0.6 5.5Z" fill="#6e6e6e" stroke="#1e1e1e" stroke-width="1"/></svg>
<svg style="left:343.0px;top:457px" width="24.500" height="25.500" viewBox="0 0 33 42" preserveAspectRatio="none"><use href="#frogt"/></svg>
<svg style="left:385.8px;top:434px" width="11" height="11" viewBox="0 0 11 11"><path d="M5.5 0.6L10.4 5.5L5.5 10.4L0.6 5.5Z" fill="#6e6e6e" stroke="#1e1e1e" stroke-width="1"/></svg>
<svg style="left:395.8px;top:457px" width="24.500" height="25.500" viewBox="0 0 33 42" preserveAspectRatio="none"><use href="#frogt"/></svg>
<svg style="left:438.6px;top:434px" width="11" height="11" viewBox="0 0 11 11"><path d="M5.5 0.6L10.4 5.5L5.5 10.4L0.6 5.5Z" fill="#6e6e6e" stroke="#1e1e1e" stroke-width="1"/></svg>
<svg style="left:448.6px;top:457px" width="24.500" height="25.500" viewBox="0 0 33 42" preserveAspectRatio="none"><use href="#frogt"/></svg>
<svg style="left:491.4px;top:434px" width="11" height="11" viewBox="0 0 11 11"><path d="M5.5 0.6L10.4 5.5L5.5 10.4L0.6 5.5Z" fill="#6e6e6e" stroke="#1e1e1e" stroke-width="1"/></svg>
<svg style="left:501.4px;top:457px" width="24.500" height="25.500" viewBox="0 0 33 42" preserveAspectRatio="none"><use href="#frogt"/></svg>
<svg style="left:544.2px;top:434px" width="11" height="11" viewBox="0 0 11 11"><path d="M5.5 0.6L10.4 5.5L5.5 10.4L0.6 5.5Z" fill="#6e6e6e" stroke="#1e1e1e" stroke-width="1"/></svg>
<svg style="left:554.2px;top:457px" width="24.500" height="25.500" viewBox="0 0 33 42" preserveAspectRatio="none"><use href="#frogt"/></svg>
<svg style="left:597.0px;top:434px" width="11" height="11" viewBox="0 0 11 11"><path d="M5.5 0.6L10.4 5.5L5.5 10.4L0.6 5.5Z" fill="#6e6e6e" stroke="#1e1e1e" stroke-width="1"/></svg>
<svg style="left:607.0px;top:457px" width="24.500" height="25.500" viewBox="0 0 33 42" preserveAspectRatio="none"><use href="#frogt"/></svg>
<svg style="left:649.8px;top:434px" width="11" height="11" viewBox="0 0 11 11"><path d="M5.5 0.6L10.4 5.5L5.5 10.4L0.6 5.5Z" fill="#6e6e6e" stroke="#1e1e1e" stroke-width="1"/></svg>
<svg style="left:659.8px;top:457px" width="24.500" height="25.500" viewBox="0 0 33 42" preserveAspectRatio="none"><use href="#frogt"/></svg>
<svg style="left:702.6px;top:434px" width="11" height="11" viewBox="0 0 11 11"><path d="M5.5 0.6L10.4 5.5L5.5 10.4L0.6 5.5Z" fill="#6e6e6e" stroke="#1e1e1e" stroke-width="1"/></svg>
<svg style="left:712.6px;top:457px" width="24.500" height="25.500" viewBox="0 0 33 42" preserveAspectRatio="none"><use href="#frogt"/></svg>
<svg style="left:755.4px;top:434px" width="11" height="11" viewBox="0 0 11 11"><path d="M5.5 0.6L10.4 5.5L5.5 10.4L0.6 5.5Z" fill="#6e6e6e" stroke="#1e1e1e" stroke-width="1"/></svg>
<svg style="left:765.4px;top:457px" width="24.500" height="25.500" viewBox="0 0 33 42" preserveAspectRatio="none"><use href="#frogt"/></svg>
<svg style="left:808.2px;top:434px" width="11" height="11" viewBox="0 0 11 11"><path d="M5.5 0.6L10.4 5.5L5.5 10.4L0.6 5.5Z" fill="#6e6e6e" stroke="#1e1e1e" stroke-width="1"/></svg>
<svg style="left:818.2px;top:457px" width="24.500" height="25.500" viewBox="0 0 33 42" preserveAspectRatio="none"><use href="#frogt"/></svg>
<svg style="left:861.0px;top:434px" width="11" height="11" viewBox="0 0 11 11"><path d="M5.5 0.6L10.4 5.5L5.5 10.4L0.6 5.5Z" fill="#6e6e6e" stroke="#1e1e1e" stroke-width="1"/></svg>
<svg style="left:871.0px;top:457px" width="24.500" height="25.500" viewBox="0 0 33 42" preserveAspectRatio="none"><use href="#frogt"/></svg>
<div class="abs" style="left:919px;top:389px;width:1px;height:146px;background:#555"></div>
<div class="abs" style="left:337px;top:389px;width:2px;height:146px;background:#dedede"></div>
<div class="abs" style="left:300px;top:535px;width:659px;height:11.500px;background:#3e3e3e"></div>
<div class="abs" style="left:316px;top:536px;width:628px;height:10px;background:#5f5f5f;border-radius:5px"></div>
<div class="abs" style="left:316px;top:536px;width:12px;height:10px;background:#858585;border-radius:5px 0 0 5px"></div>
<div class="abs" style="left:932px;top:536px;width:12px;height:10px;background:#858585;border-radius:0 5px 5px 0"></div>
<svg style="left:305px;top:537px" width="5.500" height="8" viewBox="0 0 6 9"><path d="M6 0V9L0 4.5Z" fill="#d0d0d0"/></svg>
<svg style="left:949.500px;top:537px" width="5.500" height="8" viewBox="0 0 6 9"><path d="M0 0V9L6 4.5Z" fill="#d0d0d0"/></svg>
<div class="abs" style="left:961px;top:445px;width:10px;height:73px;background:#5f5f5f;border-radius:5px"></div>
<svg style="left:961px;top:435px" width="10" height="6" viewBox="0 0 10 6"><path d="M0 6H10L5 0Z" fill="#d0d0d0"/></svg>
<svg style="left:961px;top:523px" width="10" height="6" viewBox="0 0 10 6"><path d="M0 0H10L5 6Z" fill="#d0d0d0"/></svg>
<div class="abs" style="left:958px;top:5px;width:2px;height:2px;background:#d8d8d8"></div>
<div class="abs" style="left:958px;top:9px;width:2px;height:2px;background:#d8d8d8"></div>
<div class="abs" style="left:958px;top:13px;width:2px;height:2px;background:#d8d8d8"></div>
<div class="abs" style="left:958px;top:372px;width:2px;height:2px;background:#d8d8d8"></div>
<div class="abs" style="left:958px;top:376px;width:2px;height:2px;background:#d8d8d8"></div>
<div class="abs" style="left:958px;top:380px;width:2px;height:2px;background:#d8d8d8"></div>
<div class="abs" style="left:964px;top:393px;width:2px;height:2px;background:#d8d8d8"></div>
<div class="abs" style="left:964px;top:397px;width:2px;height:2px;background:#d8d8d8"></div>
<div class="abs" style="left:964px;top:401px;width:2px;height:2px;background:#d8d8d8"></div>
<svg style="left:936px;top:371px" width="10" height="12" viewBox="0 0 10 12" fill="none" stroke="#d8d8d8" stroke-width="1.3"><rect x="1" y="5.5" width="8" height="5.5"/><path d="M3 5.5V3.5A2 2 0 0 1 7 3.5V4"/></svg>
<!-- ===== Project window ===== -->
<div class="abs" style="left:0;top:546.500px;width:977px;height:26.500px;background:#151515"></div>
<div class="abs" style="left:0;top:548px;width:80px;height:25px;background:#3c3c3c"></div>
<div class="abs" style="left:0;top:547.500px;width:80px;height:1.500px;background:#3a79bb"></div>
<svg style="left:7px;top:556px" width="13" height="11" viewBox="0 0 12.5 10.5"><path d="M0 1.2Q0 0 1.2 0H4.6L6 1.6H11.3Q12.5 1.6 12.5 2.8V9.3Q12.5 10.5 11.3 10.5H1.2Q0 10.5 0 9.3Z" fill="#c8c8c8"/></svg>
<div class="t" style="left:24px;top:555px">Project</div>
<svg style="left:91px;top:556px" width="11" height="11" viewBox="0 0 11 11"><rect x="0" y="0" width="11" height="11" rx="1.500" fill="#cdcdcd"/><path d="M2.200 3H8.800M2.200 5.500H8.800M2.200 8H8.800" stroke="#1c1c1c" stroke-width="1.200"/></svg>
<div class="t" style="left:106px;top:555px">Console</div>
<div class="abs" style="left:0;top:573px;width:977px;height:21px;background:#3c3c3c;border-bottom:1px solid #262626"></div>
<svg style="left:6px;top:577px" width="24" height="12" viewBox="0 0 24 12"><path d="M6 0.5V11.5M0.5 6H11.5" stroke="#d8d8d8" stroke-width="1.5"/><path d="M16 4.5H23L19.5 8.5Z" fill="#c8c8c8"/></svg>
<div class="abs" style="left:0;top:594px;width:206px;height:197px;background:#383838"></div>
<div class="abs" style="left:206px;top:594px;width:2px;height:197px;background:#262626"></div>
<div class="abs" style="left:208px;top:594px;width:769px;height:197px;background:#333"></div>
<div class="abs" style="left:208px;top:594px;width:769px;height:21px;background:#404040"></div>
<div class="t" style="left:211px;top:597px;color:#b8b8b8">Assets</div>
<svg style="left:254px;top:600px" width="6" height="9" viewBox="0 0 6 9"><path d="M0.8 0.8L5 4.5L0.8 8.2" fill="none" stroke="#a8a8a8" stroke-width="1.2"/></svg>
<div class="t b" style="left:267px;top:597px">Animation</div>
<div class="abs" style="left:0;top:1px;width:206px;height:0">
<div class="abs" style="left:0;top:688px;width:206px;height:16px;background:#4d4d4d"></div>
<svg style="left:3px;top:598px" width="9" height="8" viewBox="0 0 9 8"><path d="M0 0H9L4.5 7.5Z" fill="#7a7a7a"/></svg>
<svg style="left:16px;top:595px" width="13" height="13" viewBox="0 0 13 13"><path d="M6.5 0.3L8.4 4.4L12.8 4.9L9.5 7.9L10.4 12.4L6.5 10.1L2.6 12.4L3.5 7.9L0.2 4.9L4.6 4.4Z" fill="#d0d0d0"/></svg>
<div class="t b" style="left:34px;top:594px">Favorites</div>
<svg style="left:30px;top:611px" width="13" height="13" viewBox="0 0 13 13" fill="none" stroke="#c8c8c8" stroke-width="1.4"><circle cx="5" cy="5" r="3.8"/><path d="M8 8L12.2 12.2" stroke-width="1.8"/></svg>
<div class="t" style="left:47px;top:610px">All Materials</div>
<svg style="left:30px;top:627px" width="13" height="13" viewBox="0 0 13 13" fill="none" stroke="#c8c8c8" stroke-width="1.4"><circle cx="5" cy="5" r="3.8"/><path d="M8 8L12.2 12.2" stroke-width="1.8"/></svg>
<div class="t" style="left:47px;top:626px">All Models</div>
<svg style="left:30px;top:643px" width="13" height="13" viewBox="0 0 13 13" fill="none" stroke="#c8c8c8" stroke-width="1.4"><circle cx="5" cy="5" r="3.8"/><path d="M8 8L12.2 12.2" stroke-width="1.8"/></svg>
<div class="t" style="left:47px;top:642px">All Prefabs</div>
<svg style="left:3px;top:677px" width="9" height="8" viewBox="0 0 9 8"><path d="M0 0H9L4.5 7.5Z" fill="#7a7a7a"/></svg>
<svg style="left:16px;top:675px" width="14" height="11" viewBox="0 0 14 11"><path d="M0 1.2Q0 0 1.2 0H4.4L5.8 1.6H10.4Q11.4 1.6 11.4 2.8V3.6H3.4L0.9 10.2Q0 10 0 9Z" fill="#c8c8c8"/><path d="M3.9 4.4H13.9L11.6 10.5H1.6Z" fill="#c8c8c8"/></svg>
<div class="t b" style="left:34px;top:673px">Assets</div>
<svg style="left:31px;top:691px" width="13" height="11" viewBox="0 0 12.5 10.5"><path d="M0 1.2Q0 0 1.2 0H4.6L6 1.6H11.3Q12.5 1.6 12.5 2.8V9.3Q12.5 10.5 11.3 10.5H1.2Q0 10.5 0 9.3Z" fill="#c8c8c8"/></svg>
<div class="t" style="left:47px;top:689px">Animation</div>
<svg style="left:31px;top:707px" width="13" height="11" viewBox="0 0 12.5 10.5"><path d="M0 1.2Q0 0 1.2 0H4.6L6 1.6H11.3Q12.5 1.6 12.5 2.8V9.3Q12.5 10.5 11.3 10.5H1.2Q0 10.5 0 9.3Z" fill="#c8c8c8"/></svg>
<div class="t" style="left:47px;top:705px">Scenes</div>
<svg style="left:31px;top:723px" width="13" height="11" viewBox="0 0 12.5 10.5"><path d="M0 1.2Q0 0 1.2 0H4.6L6 1.6H11.3Q12.5 1.6 12.5 2.8V9.3Q12.5 10.5 11.3 10.5H1.2Q0 10.5 0 9.3Z" fill="#c8c8c8"/></svg>
<div class="t" style="left:47px;top:721px">Scripts</div>
<svg style="left:31px;top:739px" width="13" height="11" viewBox="0 0 12.5 10.5"><path d="M0 1.2Q0 0 1.2 0H4.6L6 1.6H11.3Q12.5 1.6 12.5 2.8V9.3Q12.5 10.5 11.3 10.5H1.2Q0 10.5 0 9.3Z" fill="#c8c8c8"/></svg>
<div class="t" style="left:47px;top:737px">Settings</div>
<svg style="left:31px;top:755px" width="13" height="11" viewBox="0 0 12.5 10.5"><path d="M0 1.2Q0 0 1.2 0H4.6L6 1.6H11.3Q12.5 1.6 12.5 2.8V9.3Q12.5 10.5 11.3 10.5H1.2Q0 10.5 0 9.3Z" fill="#c8c8c8"/></svg>
<div class="t" style="left:47px;top:753px">Sprites</div>
<svg style="left:19px;top:740px" width="8" height="9" viewBox="0 0 8 9"><path d="M0 0V9L7.5 4.5Z" fill="#6a6a6a"/></svg>
<svg style="left:3px;top:772px" width="8" height="9" viewBox="0 0 8 9"><path d="M0 0V9L7.5 4.5Z" fill="#6a6a6a"/></svg>
<svg style="left:16px;top:771px" width="13" height="11" viewBox="0 0 12.5 10.5"><path d="M0 1.2Q0 0 1.2 0H4.6L6 1.6H11.3Q12.5 1.6 12.5 2.8V9.3Q12.5 10.5 11.3 10.5H1.2Q0 10.5 0 9.3Z" fill="#c8c8c8"/></svg>
<div class="t b" style="left:34px;top:769px">Packages</div>
</div>
<svg style="left:232.0px;top:640px" width="76" height="54" viewBox="0 0 76 54"><path d="M42.300 6.500L64 46.500H20.800Z" fill="#8af9e2" stroke="#8af9e2" stroke-width="10" stroke-linejoin="round"/><g fill="#c6c6c6"><path d="M9.300 13H28L25.600 18H9.300A2.500 2.500 0 0 1 9.300 13Z"/><path d="M3.500 24H22.200L19.800 29H3.500A2.500 2.500 0 0 1 3.500 24Z"/><path d="M3.500 35.300H16.300L13.900 40.300H3.500A2.500 2.500 0 0 1 3.500 35.300Z"/></g></svg>
<svg style="left:333.0px;top:640px" width="76" height="54" viewBox="0 0 76 54"><path d="M42.300 6.500L64 46.500H20.800Z" fill="#8af9e2" stroke="#8af9e2" stroke-width="10" stroke-linejoin="round"/><g fill="#c6c6c6"><path d="M9.300 13H28L25.600 18H9.300A2.500 2.500 0 0 1 9.300 13Z"/><path d="M3.500 24H22.200L19.800 29H3.500A2.500 2.500 0 0 1 3.500 24Z"/><path d="M3.500 35.300H16.300L13.900 40.300H3.500A2.500 2.500 0 0 1 3.500 35.300Z"/></g></svg>
<svg style="left:434.0px;top:640px" width="76" height="54" viewBox="0 0 76 54"><path d="M42.300 6.500L64 46.500H20.800Z" fill="#8af9e2" stroke="#8af9e2" stroke-width="10" stroke-linejoin="round"/><g fill="#c6c6c6"><path d="M9.300 13H28L25.600 18H9.300A2.500 2.500 0 0 1 9.300 13Z"/><path d="M3.500 24H22.200L19.800 29H3.500A2.500 2.500 0 0 1 3.500 24Z"/><path d="M3.500 35.300H16.300L13.900 40.300H3.500A2.500 2.500 0 0 1 3.500 35.300Z"/></g></svg>
<svg style="left:636.0px;top:640px" width="76" height="54" viewBox="0 0 76 54"><path d="M42.300 6.500L64 46.500H20.800Z" fill="#8af9e2" stroke="#8af9e2" stroke-width="10" stroke-linejoin="round"/><g fill="#c6c6c6"><path d="M9.300 13H28L25.600 18H9.300A2.500 2.500 0 0 1 9.300 13Z"/><path d="M3.500 24H22.200L19.800 29H3.500A2.500 2.500 0 0 1 3.500 24Z"/><path d="M3.500 35.300H16.300L13.900 40.300H3.500A2.500 2.500 0 0 1 3.500 35.300Z"/></g></svg>
<svg style="left:535px;top:635px" width="69" height="69" viewBox="0 0 69 69"><path d="M28 14.700H49.500Q53.900 14.700 53.900 19.100V34.300M15.100 34.500V49.600Q15.100 54 19.500 54H41" fill="none" stroke="#8af9e2" stroke-width="5.500"/><rect x="1.100" y="1.100" width="27.800" height="27.800" rx="4.800" fill="#c4c4c4"/><rect x="40.300" y="40" width="27.700" height="27.800" rx="4.800" fill="#c4c4c4"/></svg>
<div class="t" style="left:226.5px;top:715px;width:80px;text-align:center;font-size:11px;color:#c0c0c0">fall</div>
<div class="t" style="left:327.0px;top:715px;width:80px;text-align:center;font-size:11px;color:#c0c0c0">idle</div>
<div class="t" style="left:428.0px;top:715px;width:80px;text-align:center;font-size:11px;color:#c0c0c0">jump</div>
<div class="t" style="left:529.0px;top:715px;width:80px;text-align:center;font-size:11px;color:#c0c0c0">player</div>
<div class="t" style="left:630.5px;top:715px;width:80px;text-align:center;font-size:11px;color:#c0c0c0">run</div>
<!-- red hand-drawn annotations -->
<svg style="left:0;top:0" width="977" height="791" viewBox="0 0 977 791" fill="none" stroke="#ee1530" stroke-width="2" stroke-linecap="round"><path d="M25.5 388.3C33 385.5 42 383 52 382.6C66 382.2 82 382.6 96.3 383.8"/><path d="M3.8 428.5H24.5"/><path d="M49 703.2C66 702.6 88 703.2 107 702.4"/></svg>
<!-- right window edge (adjacent dock peeking) -->
<div class="abs" style="left:972px;top:0;width:3px;height:547px;background:#191919"></div>
<div class="abs" style="left:975px;top:0;width:2px;height:547px;background:#313131"></div>
</body>
</html>
